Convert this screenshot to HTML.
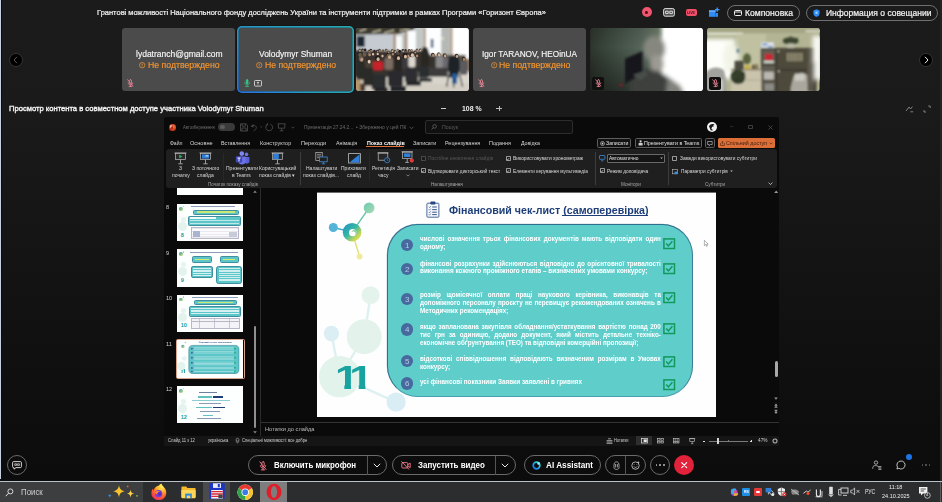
<!DOCTYPE html>
<html lang="ru"><head><meta charset="utf-8"><title>Webex</title>
<style>
html,body{margin:0;padding:0;}
body{width:942px;height:502px;overflow:hidden;position:relative;background:#101010;font-family:"Liberation Sans",sans-serif;}
#app{position:absolute;left:0;top:0;width:942px;height:481px;background:linear-gradient(180deg,#1b1b1b 0px,#1a1a1a 110px,#141414 250px,#0d0d0d 430px,#0c0c0c 481px);overflow:hidden;}
.t{position:absolute;white-space:nowrap;display:block;}
.b{position:absolute;box-sizing:border-box;}
svg{position:absolute;overflow:visible;}
</style></head><body>
<div id="app">

<div class="b" style="left:0.00px;top:0.00px;width:1.10px;height:479.00px;background:#c6d0de;"></div>
<div class="b" style="left:1.10px;top:0.00px;width:1.00px;height:480.00px;background:#0d0d0d;"></div>
<div class="b" style="left:940.40px;top:0.00px;width:1.60px;height:481.00px;background:#242424;"></div>
<span class="t" style="top:8px;font-size:7.8px;line-height:9.75px;color:#f0f0f0;left:97.00px;transform:scaleX(0.9617);transform-origin:0 50%;-webkit-text-stroke:0.22px #f0f0f0;">Грантові можливості Національного фонду досліджень України та інструменти підтримки в рамках Програми «Горизонт Європа»</span>
<div class="b" style="left:641.50px;top:7.10px;width:10.40px;height:10.40px;border-radius:50%;background:#f0566e;"></div>
<div class="b" style="left:645.20px;top:10.80px;width:3.20px;height:3.20px;border-radius:1px 50% 50% 1px;background:#4a1420;"></div>
<svg style="left:663px;top:8px" width="12" height="9" viewBox="0 0 12 9"><rect x="0.6" y="0.6" width="10.8" height="7.6" rx="1.6" fill="#4c4c4c" stroke="#e0e0e0" stroke-width="1"/><path d="M2.6 3.2h2.6v2.4H2.6zM6.8 3.2h2.6v2.4H6.8z" fill="none" stroke="#e8e8e8" stroke-width="0.9"/></svg>
<div class="b" style="left:685.50px;top:8.60px;width:11.50px;height:7.40px;border-radius:2px;background:#f0506a;"></div>
<span class="t" style="top:11px;font-size:3.6px;line-height:4.5px;color:#4a1420;font-weight:bold;left:687.20px;transform:scaleX(0.9990);transform-origin:50% 50%;">LIVE</span>
<svg style="left:708px;top:6.5px" width="12" height="11" viewBox="0 0 12 11"><path d="M1 3.4h6.6v6.4H1z" fill="#2f8df5"/><path d="M1 3.4h6.6v1.5H1z" fill="#6fb2ff"/><path d="M9.2 0.4v4.4M7 2.6h4.4" stroke="#3f9bff" stroke-width="1.3" fill="none"/><path d="M7.6 6l2.4 0v3.8H7.6z" fill="#2f8df5"/></svg>
<div class="b" style="left:727.40px;top:4.50px;width:72.40px;height:16.30px;border:1px solid #707070;border-radius:9px;"></div>
<svg style="left:733.5px;top:9.6px" width="8" height="6" viewBox="0 0 8 6"><rect x="0.5" y="0.5" width="7" height="5" rx="1" fill="none" stroke="#eee" stroke-width="1"/><path d="M0.5 2h7" stroke="#eee" stroke-width="0.9"/></svg>
<span class="t" style="top:8px;font-size:9.2px;line-height:11.5px;color:#f4f4f4;left:745.10px;transform:scaleX(0.9352);transform-origin:0 50%;-webkit-text-stroke:0.22px #f4f4f4;">Компоновка</span>
<div class="b" style="left:806.00px;top:4.50px;width:131.60px;height:16.30px;border:1px solid #707070;border-radius:9px;"></div>
<svg style="left:812.5px;top:8.6px" width="7" height="8" viewBox="0 0 7 8"><path d="M3.5 0.3L6.6 1.6v2.6c0 2-1.6 3.2-3.1 3.6C2 7.4 0.4 6.2 0.4 4.2V1.6z" fill="#2f8df5"/><circle cx="3.5" cy="3.8" r="1.2" fill="#9fd0ff"/></svg>
<span class="t" style="top:8px;font-size:9.2px;line-height:11.5px;color:#f4f4f4;left:825.80px;transform:scaleX(0.9237);transform-origin:0 50%;-webkit-text-stroke:0.22px #f4f4f4;">Информация о совещании</span>
<div class="b" style="left:9.30px;top:52.50px;width:14.00px;height:14.00px;border-radius:50%;background:#000;border:1px solid #333;"></div>
<svg style="left:13.4px;top:56px" width="5" height="8" viewBox="0 0 5 8"><path d="M4 0.8L1 4l3 3.2" fill="none" stroke="#5a5a5a" stroke-width="1"/></svg>
<div class="b" style="left:919.00px;top:52.50px;width:14.00px;height:14.00px;border-radius:50%;background:#000;border:1px solid #333;"></div>
<svg style="left:924px;top:56px" width="5" height="8" viewBox="0 0 5 8"><path d="M1 0.8L4 4l-3 3.2" fill="none" stroke="#f0f0f0" stroke-width="1"/></svg>
<div class="b" style="left:122.30px;top:27.60px;width:112.80px;height:63.60px;background:#4b4b4b;border-radius:3px;"></div>
<span class="t" style="top:49px;font-size:8.8px;line-height:11.0px;color:#f6f6f6;left:135.70px;transform:scaleX(0.9673);transform-origin:0 50%;-webkit-text-stroke:0.15px #f6f6f6;">lydatranch@gmail.com</span>
<svg style="left:139.00px;top:61.70px" width="6.4" height="6.4" viewBox="0 0 10 10"><circle cx="5" cy="5" r="4.2" fill="none" stroke="#f39a3a" stroke-width="1.1"/><path d="M5 2.6v3.2M5 7v0.8" stroke="#f39a3a" stroke-width="1.2" fill="none"/></svg><span class="t" style="top:60px;font-size:8.6px;line-height:10.75px;color:#f6962e;left:148.20px;transform:scaleX(1.0125);transform-origin:0 50%;-webkit-text-stroke:0.15px #f6962e;">Не подтверждено</span>
<svg style="left:126.60px;top:79.35px" width="6.8" height="8.5" viewBox="0 0 8 10"><g fill="none" stroke="#f08a9a" stroke-width="0.9" stroke-linecap="round"><rect x="2.9" y="0.8" width="2.4" height="5" rx="1.2"/><path d="M1.4 4.6c0 3.4 5.4 3.4 5.4 0M4.1 7.2v1.6M2.4 8.9h3.4M0.8 0.8l6 7.4"/></g></svg>
<div class="b" style="left:237.40px;top:26.10px;width:116.60px;height:66.60px;border-radius:5px;background:radial-gradient(circle at 0% 100%,#2a72dc 0%,#2a82d4 22%,#299cc0 55%,#2aaab2 100%);box-shadow:0 0 0 0.6px #121212;"></div>
<div class="b" style="left:239.30px;top:28.00px;width:112.80px;height:62.80px;background:#4b4b4b;border-radius:3.2px;box-shadow:0 0 0 0.5px rgba(20,40,50,0.6);"></div>
<span class="t" style="top:49px;font-size:8.8px;line-height:11.0px;color:#f6f6f6;left:259.10px;transform:scaleX(0.9580);transform-origin:0 50%;-webkit-text-stroke:0.15px #f6f6f6;">Volodymyr Shuman</span>
<svg style="left:256.00px;top:61.70px" width="6.4" height="6.4" viewBox="0 0 10 10"><circle cx="5" cy="5" r="4.2" fill="none" stroke="#f39a3a" stroke-width="1.1"/><path d="M5 2.6v3.2M5 7v0.8" stroke="#f39a3a" stroke-width="1.2" fill="none"/></svg><span class="t" style="top:60px;font-size:8.6px;line-height:10.75px;color:#f6962e;left:265.40px;transform:scaleX(1.0054);transform-origin:0 50%;-webkit-text-stroke:0.15px #f6962e;">Не подтверждено</span>
<svg style="left:244.3px;top:79.2px" width="6.2" height="8" viewBox="0 0 7 9"><g fill="none" stroke="#35c98e" stroke-width="0.8" stroke-linecap="round"><rect x="2.5" y="0.6" width="2" height="4.8" rx="1" fill="#35c98e"/><path d="M0.8 4.2c0 3.4 5.4 3.4 5.4 0M3.5 6.8v1.4M1.8 8.4h3.4"/></g></svg>
<svg style="left:254px;top:79.6px" width="8" height="7" viewBox="0 0 8 7"><rect x="0.5" y="0.5" width="7" height="5.6" rx="0.8" fill="none" stroke="#d8d8d8" stroke-width="0.9"/><path d="M4 4.6V2M2.9 3l1.1-1.1L5.1 3" fill="none" stroke="#d8d8d8" stroke-width="0.8"/></svg>
<svg style="left:356.4px;top:27.6px;border-radius:3px;overflow:hidden" width="112.8" height="63.6" viewBox="0 0 113 64">
<defs><filter id="bl1" x="-10%" y="-10%" width="120%" height="120%"><feGaussianBlur stdDeviation="0.950"/></filter>
<filter id="bl1b" x="-10%" y="-10%" width="120%" height="120%"><feGaussianBlur stdDeviation="0.800"/></filter></defs>
<rect width="113" height="64" fill="#c6c9c8"/>
<g filter="url(#bl1)">
<rect x="0" y="4" width="40" height="22" fill="#c5cbd0"/>
<path d="M-2 -2H62L56 2 40 6 -2 6.500z" fill="#3b372f"/>
<path d="M3 3.200l7-2.200M16 4.600l9-2.600M28 5l10-2.800M44 2.600l10-1.800" stroke="#e8e0c0" stroke-width="1.100"/>
<rect x="0.500" y="8" width="8" height="11" fill="#1f2731"/>
<rect x="37.600" y="5" width="2.200" height="20" fill="#a5856a"/>
<rect x="40" y="8" width="6.500" height="15" fill="#f7f9fb"/>
<rect x="46.500" y="6" width="3" height="18" fill="#b9bdb9"/>
<rect x="49.300" y="4" width="2.200" height="21" fill="#a5856a"/>
<rect x="51.600" y="3" width="8.600" height="21" fill="#fbfdff"/>
<rect x="60" y="0" width="8.500" height="26" fill="#c3c7c6"/>
<rect x="68.200" y="0" width="1.800" height="27" fill="#b08e72"/>
<rect x="70" y="-1" width="15.500" height="30" fill="#fdfeff"/>
<rect x="75" y="11" width="2.600" height="9" fill="#50627c"/>
<rect x="85.500" y="-1" width="9.800" height="31" fill="#b5b9b5"/>
<rect x="86" y="9" width="1.500" height="3" fill="#f8f0d0"/>
<rect x="95.200" y="-1" width="1.800" height="31" fill="#b89474"/>
<rect x="97" y="-1" width="17" height="32" fill="#ffffff"/>
<rect x="104" y="31" width="10" height="12" fill="#8c6c4c"/>
<rect x="-2" y="23" width="70" height="26" fill="#38332f"/>
<rect x="68" y="27" width="42" height="22" fill="#5a544e"/>
<rect x="-2" y="50" width="118" height="16" fill="#d3cec4"/>
<rect x="60" y="44" width="56" height="12" fill="#d9d5cc"/>
<path d="M0 22h6v10l4 6v14H0z" fill="#2c2a28"/>
<rect x="16" y="33.500" width="11" height="9" rx="2" fill="#c8222c"/>
<rect x="28.500" y="30" width="8.500" height="12" rx="2" fill="#7c6c62"/>
<rect x="9" y="32" width="8" height="12" rx="2" fill="#4a4036"/>
<rect x="38" y="29" width="9" height="14" rx="2" fill="#2a2624"/>
<rect x="52.500" y="27.500" width="7" height="12" rx="2" fill="#dcd8d0"/>
<rect x="46" y="30" width="6" height="12" rx="2" fill="#3a3a40"/>
<path d="M66 21c1-3 5-3 6 0l2 6v12h-9V27z" fill="#2a2522"/>
<rect x="74" y="29" width="7" height="14" rx="2" fill="#34302e"/>
<rect x="80" y="28.500" width="8" height="15" rx="2" fill="#8a8a8c"/>
<rect x="87" y="30" width="6" height="14" rx="2" fill="#6a6a70"/>
<path d="M93 30c2-3 8-3 10 0l2 8-3 12h-8l-2-12z" fill="#1d2026"/>
<rect x="96.500" y="46" width="5" height="10" fill="#2462a4"/>
<path d="M93 47l-2 12M104 47l3 12M98 50v10" stroke="#22252a" stroke-width="1.200"/>
<rect x="104" y="33" width="8" height="14" rx="2" fill="#5a5a5e"/>
<rect x="72" y="40" width="20" height="9" fill="#3c3a3a"/>
<rect x="15.500" y="47" width="14.500" height="15" rx="1.500" fill="#2b2d2f"/>
<rect x="32" y="43.500" width="15" height="15" rx="1.500" fill="#292b2d"/>
<rect x="49" y="40.500" width="13" height="14" rx="1.500" fill="#2d2f31"/>
<rect x="62.500" y="38" width="10.500" height="12" rx="1.500" fill="#2b2d2f"/>
<rect x="7" y="40" width="10" height="18" fill="#2a2a28"/>
<rect x="34" y="58.500" width="16" height="6" fill="#24262a"/>
<rect x="50" y="53.500" width="15" height="4.500" fill="#26282a"/>
<rect x="63" y="50.500" width="13" height="3.500" fill="#2a2c2e"/>
<rect x="18" y="60" width="14" height="5" fill="#26282a"/>
<rect x="-2" y="52" width="6.500" height="14" fill="#b8966a"/>
<rect x="4" y="56" width="5" height="8" fill="#4a3a30"/>
</g>
<g filter="url(#bl1b)"><ellipse cx="3.5" cy="22.3" rx="1.36" ry="1.56" fill="#5a4a3a"/>
<ellipse cx="3.7" cy="22.8" rx="0.84" ry="1.02" fill="#c8a890"/>
<ellipse cx="6.4" cy="22.1" rx="1.30" ry="1.50" fill="#1e1c1c"/>
<ellipse cx="6.7" cy="22.6" rx="0.81" ry="0.98" fill="#a88870"/>
<ellipse cx="8.9" cy="22.2" rx="1.27" ry="1.46" fill="#2a2420"/>
<ellipse cx="13.0" cy="23.4" rx="1.33" ry="1.53" fill="#5a4a3a"/>
<ellipse cx="13.3" cy="23.9" rx="0.83" ry="1.00" fill="#a88870"/>
<ellipse cx="14.7" cy="22.5" rx="1.32" ry="1.52" fill="#1e1c1c"/>
<ellipse cx="14.9" cy="22.9" rx="0.82" ry="0.99" fill="#b89880"/>
<ellipse cx="18.3" cy="23.3" rx="1.32" ry="1.52" fill="#2a2420"/>
<ellipse cx="21.2" cy="23.4" rx="1.25" ry="1.44" fill="#2a2420"/>
<ellipse cx="21.5" cy="23.8" rx="0.77" ry="0.94" fill="#e0c8b0"/>
<ellipse cx="23.4" cy="22.5" rx="1.37" ry="1.58" fill="#4a3a30"/>
<ellipse cx="23.7" cy="22.9" rx="0.85" ry="1.03" fill="#a88870"/>
<ellipse cx="27.0" cy="23.0" rx="1.22" ry="1.40" fill="#6a5a48"/>
<ellipse cx="30.2" cy="22.2" rx="1.22" ry="1.40" fill="#4a3a30"/>
<ellipse cx="30.4" cy="22.6" rx="0.76" ry="0.92" fill="#a88870"/>
<ellipse cx="32.4" cy="24.2" rx="1.15" ry="1.32" fill="#4a3a30"/>
<ellipse cx="32.6" cy="24.6" rx="0.71" ry="0.86" fill="#b89880"/>
<ellipse cx="36.2" cy="22.9" rx="1.48" ry="1.71" fill="#5a4a3a"/>
<ellipse cx="36.5" cy="23.4" rx="0.92" ry="1.11" fill="#e0c8b0"/>
<ellipse cx="38.9" cy="23.8" rx="1.24" ry="1.42" fill="#1e1c1c"/>
<ellipse cx="39.2" cy="24.2" rx="0.77" ry="0.93" fill="#e0c8b0"/>
<ellipse cx="41.8" cy="22.2" rx="1.14" ry="1.31" fill="#6a5a48"/>
<ellipse cx="42.0" cy="22.5" rx="0.71" ry="0.85" fill="#c8a890"/>
<ellipse cx="43.7" cy="23.5" rx="1.36" ry="1.56" fill="#1e1c1c"/>
<ellipse cx="46.9" cy="22.8" rx="1.37" ry="1.57" fill="#1e1c1c"/>
<ellipse cx="47.2" cy="23.3" rx="0.85" ry="1.03" fill="#d8b8a0"/>
<ellipse cx="49.6" cy="22.3" rx="1.12" ry="1.29" fill="#3a2e28"/>
<ellipse cx="53.3" cy="22.9" rx="1.47" ry="1.69" fill="#3a2e28"/>
<ellipse cx="53.6" cy="23.4" rx="0.91" ry="1.10" fill="#a88870"/>
<ellipse cx="55.8" cy="22.6" rx="1.15" ry="1.33" fill="#5a4a3a"/>
<ellipse cx="56.0" cy="23.0" rx="0.72" ry="0.87" fill="#d8b8a0"/>
<ellipse cx="59.1" cy="24.2" rx="1.37" ry="1.58" fill="#3a2e28"/>
<ellipse cx="59.4" cy="24.7" rx="0.85" ry="1.03" fill="#b89880"/>
<ellipse cx="61.1" cy="22.3" rx="1.36" ry="1.57" fill="#5a4a3a"/>
<ellipse cx="61.4" cy="22.8" rx="0.85" ry="1.02" fill="#b89880"/>
<ellipse cx="64.3" cy="22.0" rx="1.27" ry="1.46" fill="#5a4a3a"/>
<ellipse cx="64.5" cy="22.5" rx="0.79" ry="0.95" fill="#d8b8a0"/>
<ellipse cx="3.9" cy="27.2" rx="1.81" ry="2.08" fill="#6a5a48"/>
<ellipse cx="8.3" cy="26.6" rx="1.95" ry="2.24" fill="#6a5a48"/>
<ellipse cx="13.2" cy="26.5" rx="1.76" ry="2.02" fill="#6a5a48"/>
<ellipse cx="13.5" cy="27.1" rx="1.09" ry="1.32" fill="#a88870"/>
<ellipse cx="16.5" cy="25.7" rx="1.68" ry="1.94" fill="#4a3a30"/>
<ellipse cx="16.9" cy="26.3" rx="1.04" ry="1.26" fill="#e0c8b0"/>
<ellipse cx="21.3" cy="25.5" rx="1.66" ry="1.91" fill="#4a3a30"/>
<ellipse cx="21.6" cy="26.1" rx="1.03" ry="1.25" fill="#e0c8b0"/>
<ellipse cx="26.1" cy="27.7" rx="1.85" ry="2.12" fill="#4a3a30"/>
<ellipse cx="26.4" cy="28.3" rx="1.14" ry="1.38" fill="#d8b8a0"/>
<ellipse cx="32.0" cy="26.7" rx="1.65" ry="1.89" fill="#1e1c1c"/>
<ellipse cx="32.3" cy="27.3" rx="1.02" ry="1.23" fill="#a88870"/>
<ellipse cx="36.6" cy="25.7" rx="1.64" ry="1.89" fill="#4a3a30"/>
<ellipse cx="36.9" cy="26.3" rx="1.02" ry="1.23" fill="#a88870"/>
<ellipse cx="42.1" cy="25.9" rx="1.61" ry="1.85" fill="#5a4a3a"/>
<ellipse cx="45.9" cy="27.2" rx="1.97" ry="2.26" fill="#4a3a30"/>
<ellipse cx="52.0" cy="27.7" rx="1.88" ry="2.16" fill="#4a3a30"/>
<ellipse cx="52.3" cy="28.3" rx="1.16" ry="1.41" fill="#b89880"/>
<ellipse cx="55.5" cy="26.1" rx="1.82" ry="2.09" fill="#6a5a48"/>
<ellipse cx="55.9" cy="26.7" rx="1.13" ry="1.36" fill="#b89880"/>
<ellipse cx="60.8" cy="27.5" rx="1.90" ry="2.19" fill="#3a2e28"/>
<ellipse cx="61.2" cy="28.1" rx="1.18" ry="1.43" fill="#a88870"/>
<ellipse cx="5.0" cy="31.0" rx="2.50" ry="2.88" fill="#6a5a48"/>
<ellipse cx="5.5" cy="31.9" rx="1.55" ry="1.88" fill="#b89880"/>
<ellipse cx="12.5" cy="33.0" rx="2.50" ry="2.88" fill="#3a2e28"/>
<ellipse cx="13.0" cy="33.9" rx="1.55" ry="1.88" fill="#e0c8b0"/>
<ellipse cx="21.5" cy="30.5" rx="2.50" ry="2.88" fill="#1e1c1c"/>
<ellipse cx="22.0" cy="31.4" rx="1.55" ry="1.88" fill="#d8b8a0"/>
<ellipse cx="33.0" cy="28.5" rx="2.50" ry="2.88" fill="#6a5a48"/>
<ellipse cx="33.5" cy="29.4" rx="1.55" ry="1.88" fill="#c8a890"/>
<ellipse cx="42.0" cy="29.5" rx="2.50" ry="2.88" fill="#2a2420"/>
<ellipse cx="42.5" cy="30.4" rx="1.55" ry="1.88" fill="#d8b8a0"/>
<ellipse cx="49.0" cy="28.0" rx="2.50" ry="2.88" fill="#1e1c1c"/>
<ellipse cx="49.5" cy="28.9" rx="1.55" ry="1.88" fill="#d8b8a0"/>
<ellipse cx="56.0" cy="26.5" rx="2.50" ry="2.88" fill="#3a2e28"/>
<ellipse cx="56.5" cy="27.4" rx="1.55" ry="1.88" fill="#e0c8b0"/>
<ellipse cx="77.0" cy="27.0" rx="1.90" ry="2.18" fill="#4a3a30"/>
<ellipse cx="77.4" cy="27.7" rx="1.18" ry="1.42" fill="#a88870"/>
<ellipse cx="83.0" cy="26.5" rx="1.90" ry="2.18" fill="#6a5a48"/>
<ellipse cx="83.4" cy="27.2" rx="1.18" ry="1.42" fill="#d8b8a0"/>
<ellipse cx="89.0" cy="27.5" rx="1.90" ry="2.18" fill="#4a3a30"/>
<ellipse cx="89.4" cy="28.2" rx="1.18" ry="1.42" fill="#c8a890"/>
<ellipse cx="101.0" cy="28.0" rx="1.90" ry="2.18" fill="#3a2e28"/>
<ellipse cx="101.4" cy="28.7" rx="1.18" ry="1.42" fill="#c8a890"/>
<ellipse cx="108.0" cy="31.0" rx="1.90" ry="2.18" fill="#3a2e28"/>
<ellipse cx="108.4" cy="31.7" rx="1.18" ry="1.42" fill="#a88870"/></g>
</svg>
<div class="b" style="left:473.40px;top:27.60px;width:112.80px;height:63.60px;background:#4b4b4b;border-radius:3px;"></div>
<span class="t" style="top:49px;font-size:8.8px;line-height:11.0px;color:#f6f6f6;left:482.00px;transform:scaleX(0.9354);transform-origin:0 50%;-webkit-text-stroke:0.15px #f6f6f6;">Igor TARANOV, HEOinUA</span>
<svg style="left:490.80px;top:61.70px" width="6.4" height="6.4" viewBox="0 0 10 10"><circle cx="5" cy="5" r="4.2" fill="none" stroke="#f39a3a" stroke-width="1.1"/><path d="M5 2.6v3.2M5 7v0.8" stroke="#f39a3a" stroke-width="1.2" fill="none"/></svg><span class="t" style="top:60px;font-size:8.6px;line-height:10.75px;color:#f6962e;left:499.00px;transform:scaleX(1.0111);transform-origin:0 50%;-webkit-text-stroke:0.15px #f6962e;">Не подтверждено</span>
<svg style="left:478.10px;top:79.35px" width="6.8" height="8.5" viewBox="0 0 8 10"><g fill="none" stroke="#f08a9a" stroke-width="0.9" stroke-linecap="round"><rect x="2.9" y="0.8" width="2.4" height="5" rx="1.2"/><path d="M1.4 4.6c0 3.4 5.4 3.4 5.4 0M4.1 7.2v1.6M2.4 8.9h3.4M0.8 0.8l6 7.4"/></g></svg>
<svg style="left:590.2px;top:27.6px;border-radius:3px;overflow:hidden" width="112.8" height="63.6" viewBox="0 0 113 64">
<defs><filter id="bl2" x="-30%" y="-30%" width="160%" height="160%"><feGaussianBlur stdDeviation="2.400"/></filter>
<filter id="bl2s" x="-20%" y="-20%" width="140%" height="140%"><feGaussianBlur stdDeviation="1"/></filter>
<linearGradient id="g2" x1="0" x2="1" y1="0" y2="0"><stop offset="0" stop-color="#2e362d"/><stop offset="0.200" stop-color="#3f4c41"/><stop offset="0.450" stop-color="#56655a"/><stop offset="0.640" stop-color="#75836f"/><stop offset="0.670" stop-color="#f2f5f0"/><stop offset="1" stop-color="#ffffff"/></linearGradient>
<linearGradient id="g2b" x1="0" x2="0" y1="0" y2="1"><stop offset="0" stop-color="#000" stop-opacity="0.120"/><stop offset="0.300" stop-color="#000" stop-opacity="0"/><stop offset="1" stop-color="#000" stop-opacity="0.420"/></linearGradient></defs>
<rect width="113" height="64" fill="url(#g2)"/>
<rect width="75" height="64" fill="url(#g2b)"/>
<g filter="url(#bl2)">
<rect x="72" y="-4" width="46" height="72" fill="#ffffff"/>
<ellipse cx="64.500" cy="21" rx="11" ry="13" fill="#86887f"/>
<ellipse cx="67" cy="36" rx="7" ry="9" fill="#9c9a92"/>
<path d="M40 68V50l16-9 14 3 14 9 10 15z" fill="#3c3f3c"/>
<path d="M78 50l12 7 6 11H76z" fill="#80837c"/>
<ellipse cx="97" cy="20" rx="14" ry="26" fill="#ffffff"/>
</g>
<g filter="url(#bl2s)"><path d="M35 31l17.500-7.500v22L35 56z" fill="#14171b"/><path d="M43 47l12-4 3 4-8 6z" fill="#4a4d4a"/><rect x="29.500" y="56" width="3" height="3" fill="#7a2028"/></g>
</svg>
<div class="b" style="left:591.80px;top:77.00px;width:12.10px;height:12.60px;background:#101010;border-radius:2px;"></div>
<svg style="left:594.60px;top:79.15px" width="6.8" height="8.5" viewBox="0 0 8 10"><g fill="none" stroke="#f08a9a" stroke-width="0.9" stroke-linecap="round"><rect x="2.9" y="0.8" width="2.4" height="5" rx="1.2"/><path d="M1.4 4.6c0 3.4 5.4 3.4 5.4 0M4.1 7.2v1.6M2.4 8.9h3.4M0.8 0.8l6 7.4"/></g></svg>
<svg style="left:707.2px;top:27.6px;border-radius:3px;overflow:hidden" width="112.8" height="63.6" viewBox="0 0 113 64">
<defs><filter id="bl3" x="-10%" y="-10%" width="120%" height="120%"><feGaussianBlur stdDeviation="0.900"/></filter>
<filter id="bl3b" x="-30%" y="-30%" width="160%" height="160%"><feGaussianBlur stdDeviation="2.200"/></filter></defs>
<rect width="113" height="64" fill="#b3b493"/>
<g filter="url(#bl3)">
<rect x="-2" y="-2" width="118" height="7" fill="#a4a584"/>
<rect x="0" y="4.800" width="36" height="1.800" fill="#e9ebda"/>
<rect x="99" y="2.500" width="15" height="1.600" fill="#dfe1cf"/>
<rect x="29" y="6" width="30" height="40" fill="#bfc1a1"/>
</g>
<g filter="url(#bl3b)">
<rect x="-4" y="11" width="32" height="40" fill="#fdfef9"/>
<ellipse cx="24" cy="30" rx="8" ry="16" fill="#f2f4e8"/>
</g>
<g filter="url(#bl3)">
<path d="M-2 66V46c4-7 14-8 19-3l2 10v13z" fill="#a2a29e"/>
<rect x="2" y="52" width="14" height="14" fill="#c6c6c2"/>
<rect x="54.500" y="14.500" width="12.500" height="6" fill="#e1e8f0"/>
<rect x="55.500" y="15.800" width="5" height="1.600" fill="#3a70c0"/>
<rect x="61" y="18" width="5" height="1.400" fill="#5a80b0"/>
<rect x="54" y="20" width="56" height="46" fill="#4d483b"/>
<rect x="55.500" y="22" width="12.500" height="42" fill="#615d52"/>
<rect x="58" y="26" width="8" height="7" rx="2" fill="#c92830"/>
<rect x="57" y="33" width="10" height="2.200" fill="#cfe0d4"/>
<rect x="55.500" y="36.500" width="12.500" height="1.200" fill="#3a362c"/>
<rect x="57" y="44" width="10" height="8" fill="#b9b9b1"/>
<rect x="55.500" y="52.500" width="12.500" height="1.200" fill="#3a362c"/>
<rect x="58" y="56" width="9" height="7" fill="#8c8c86"/>
<rect x="69" y="22" width="1.200" height="44" fill="#3a362c"/>
<rect x="80" y="25" width="16" height="8.500" fill="#8d876f"/>
<path d="M83 25v8.500M86.500 25v8.500M90 25v8.500M93 25v8.500" stroke="#5a5546" stroke-width="0.800"/>
<rect x="70" y="41.500" width="38" height="1.400" fill="#38342a"/>
<circle cx="71.500" cy="23.500" r="0.900" fill="#d8d4c0"/><circle cx="103.500" cy="23.500" r="0.900" fill="#d8d4c0"/><circle cx="72" cy="43.500" r="0.900" fill="#d8d4c0"/>
<path d="M84 60l3-12 8-3 8 3 3 9v9H84z" fill="#aaa89e"/>
<rect x="88" y="46" width="10" height="7" fill="#cbcbc3"/>
<rect x="101" y="20" width="6" height="44" fill="#59544a"/>
<rect x="24" y="42" width="30.500" height="24" fill="#cac4ad"/>
<rect x="24" y="41" width="30.500" height="1.600" fill="#857f69"/>
<rect x="26" y="52" width="27" height="0.800" fill="#a8a28c"/>
<ellipse cx="31" cy="49" rx="7.500" ry="7.500" fill="#363f2c"/>
<path d="M24 47l5-4M38 45l-5 3M27 55l4-5M36 55l-4-5" stroke="#2c3524" stroke-width="1.600"/>
<rect x="27.500" y="33" width="9" height="9" fill="#4b4b41"/>
<ellipse cx="40" cy="31" rx="4" ry="5.500" fill="#59623e"/>
<ellipse cx="31" cy="23" rx="1.600" ry="2.400" fill="#6a8a9a"/>
<rect x="38" y="37.500" width="5" height="4" fill="#c9b040"/>
<rect x="45" y="37" width="3" height="4.500" fill="#6b5b3b"/><rect x="48.500" y="36.500" width="2.500" height="5" fill="#7b6b4b"/>
<ellipse cx="84" cy="13" rx="8" ry="3.800" fill="#3b452f"/>
<path d="M77 11l4 3M91 10l-4 4M84 8v5" stroke="#3b452f" stroke-width="1.200"/>
<rect x="81" y="15.500" width="6" height="4.500" fill="#bcbcac"/>
</g>
<g filter="url(#bl3b)"><rect x="106" y="8" width="9" height="44" fill="#f8faf4"/><rect x="103" y="34" width="5" height="22" fill="#6a655a"/></g>
</svg>
<div class="b" style="left:708.80px;top:77.00px;width:12.10px;height:12.60px;background:#101010;border-radius:2px;"></div>
<svg style="left:711.60px;top:79.15px" width="6.8" height="8.5" viewBox="0 0 8 10"><g fill="none" stroke="#f08a9a" stroke-width="0.9" stroke-linecap="round"><rect x="2.9" y="0.8" width="2.4" height="5" rx="1.2"/><path d="M1.4 4.6c0 3.4 5.4 3.4 5.4 0M4.1 7.2v1.6M2.4 8.9h3.4M0.8 0.8l6 7.4"/></g></svg>
<span class="t" style="top:104px;font-size:8px;line-height:10.0px;color:#f2f2f2;left:9.00px;transform:scaleX(0.9499);transform-origin:0 50%;-webkit-text-stroke:0.4px #f2f2f2;">Просмотр контента в совместном доступе участника Volodymyr Shuman</span>
<div class="b" style="left:440.50px;top:107.80px;width:5.60px;height:1.00px;background:#cdcdcd;"></div>
<span class="t" style="top:104px;font-size:7.6px;line-height:9.5px;color:#f0f0f0;font-weight:bold;left:461.50px;transform:scaleX(0.9095);transform-origin:0 50%;">108 %</span>
<div class="b" style="left:496.20px;top:107.80px;width:5.60px;height:1.00px;background:#bdbdbd;"></div>
<div class="b" style="left:498.50px;top:105.50px;width:1.00px;height:5.60px;background:#bdbdbd;"></div>
<svg style="left:904.5px;top:105px" width="9" height="8" viewBox="0 0 9 8"><path d="M1 6L4 2l1.6 2L7.4 1.6M5.4 6.8h2.8" fill="none" stroke="#8a8a8a" stroke-width="0.9"/></svg>
<svg style="left:922.5px;top:104.5px" width="8" height="8" viewBox="0 0 8 8"><path d="M5.2 1h2v2M3 7H1V5" fill="none" stroke="#8a8a8a" stroke-width="0.9"/></svg>
<div class="b" style="left:163.50px;top:117.30px;width:615.80px;height:328.30px;background:#0a0a0a;border-radius:2.5px 2.5px 0 0;"></div>
<div class="b" style="left:169.20px;top:123.60px;width:7.00px;height:7.00px;border-radius:50%;background:radial-gradient(circle at 65% 35%,#f0703a 0%,#cf3f1f 50%,#a82a1a 100%);"></div>
<div class="b" style="left:169.60px;top:125.20px;width:3.40px;height:3.80px;background:#b8301c;border-radius:0.6px;"></div>
<span class="t" style="top:125px;font-size:3.6px;line-height:4.5px;color:#ffd8c8;font-weight:bold;left:170.20px;transform:scaleX(0.9990);transform-origin:0 50%;">P</span>
<span class="t" style="top:124px;font-size:5px;line-height:6.25px;color:#6c6c6c;left:182.80px;transform:scaleX(0.8254);transform-origin:0 50%;">Автозбереження</span>
<div class="b" style="left:218.40px;top:123.40px;width:16.40px;height:7.60px;border-radius:4px;background:#3a3a3a;"></div>
<div class="b" style="left:220.00px;top:124.90px;width:4.60px;height:4.60px;border-radius:50%;background:#5c5c5c;"></div>
<svg style="left:239.5px;top:122.8px" width="60" height="9" viewBox="0 0 60 9"><g fill="none" stroke="#565656" stroke-width="0.75"><path d="M0.500 0.800h5.600l1.400 1.400v5.800H0.500z"/><path d="M2 0.800v2.400h3.400V0.800M2 8V5h4v3"/><path d="M13 1.400l-1.600 2 2.400 0.600M11.600 3.300c3-2.400 6.400 0.600 3.800 3.200l-1.800 1.600"/><path d="M20.400 3.400l1 0.900 1-0.900" stroke-width="0.6"/><path d="M30.400 1.200a3.400 3.400 0 1 1-3 0.300M27.600 0.200v1.800h-1.800"/><path d="M37.600 0.800h8M38.400 1v4.200h6.400V1M41.600 5.400v2.200M39.800 7.800h3.600"/><path d="M51.600 3.800l1.300 1.400 1.300-1.400" stroke-width="0.7"/></g></svg>
<span class="t" style="top:124px;font-size:5.4px;line-height:6.75px;color:#6c6c6c;left:304.00px;transform:scaleX(0.9011);transform-origin:0 50%;">Презентація 27.24.2...</span>
<span class="t" style="top:124px;font-size:5.4px;line-height:6.75px;color:#6c6c6c;left:356.00px;transform:scaleX(0.9264);transform-origin:0 50%;">• Збережено у цей ПК</span>
<svg style="left:408.5px;top:125.6px" width="5" height="4" viewBox="0 0 5 4"><path d="M0.600 0.800l1.900 2 1.900-2" fill="none" stroke="#6c6c6c" stroke-width="0.7"/></svg>
<div class="b" style="left:425.40px;top:120.30px;width:147.40px;height:13.30px;background:#101010;border:0.8px solid #2d2d2d;border-radius:2px;"></div>
<svg style="left:430.5px;top:124px" width="6" height="6" viewBox="0 0 6 6"><circle cx="3.600" cy="2.400" r="1.800" fill="none" stroke="#6c6c6c" stroke-width="0.7"/><path d="M2.300 3.700L0.500 5.500" stroke="#6c6c6c" stroke-width="0.7"/></svg>
<span class="t" style="top:124px;font-size:5.4px;line-height:6.75px;color:#5c5c5c;left:442.00px;transform:scaleX(0.9828);transform-origin:0 50%;">Пошук</span>
<div class="b" style="left:706.80px;top:121.80px;width:10.40px;height:10.40px;border-radius:50%;background:#f2f2f2;"></div>
<svg style="left:706.400px;top:121.400px" width="11.200" height="11.200" viewBox="0 0 11.200 11.200"><path d="M3 5.200c1-1.800 2.600-2.600 4.400-2.200l1.200 1-1.400 0.200 0.600 1.200-1.600 0.400-0.800 2 1.800 1.400-2.400 0.200z" fill="#1c1c1c"/></svg>
<span class="t" style="top:123px;font-size:6px;line-height:7.5px;color:#565656;left:729.83px;transform:scaleX(0.9990);transform-origin:50% 50%;">–</span>
<div class="b" style="left:748.20px;top:124.80px;width:4.60px;height:4.20px;border:0.6px solid #3c3c3c;border-radius:0.8px;"></div>
<svg style="left:767.600px;top:124.600px" width="5" height="5" viewBox="0 0 5 5"><path d="M0.500 0.500l4 4M4.500 0.500l-4 4" stroke="#585858" stroke-width="0.7"/></svg>
<span class="t" style="top:140px;font-size:6px;line-height:7.5px;color:#d4d4d4;left:169.50px;transform:scaleX(0.8474);transform-origin:0 50%;">Файл</span>
<span class="t" style="top:140px;font-size:6px;line-height:7.5px;color:#d4d4d4;left:190.40px;transform:scaleX(0.9356);transform-origin:0 50%;">Основне</span>
<span class="t" style="top:140px;font-size:6px;line-height:7.5px;color:#d4d4d4;left:221.00px;transform:scaleX(0.8846);transform-origin:0 50%;">Вставлення</span>
<span class="t" style="top:140px;font-size:6px;line-height:7.5px;color:#d4d4d4;left:259.80px;transform:scaleX(0.9120);transform-origin:0 50%;">Конструктор</span>
<span class="t" style="top:140px;font-size:6px;line-height:7.5px;color:#d4d4d4;left:300.80px;transform:scaleX(0.9271);transform-origin:0 50%;">Переходи</span>
<span class="t" style="top:140px;font-size:6px;line-height:7.5px;color:#d4d4d4;left:335.80px;transform:scaleX(0.8786);transform-origin:0 50%;">Анімація</span>
<span class="t" style="top:140px;font-size:6px;line-height:7.5px;color:#d4d4d4;left:412.80px;transform:scaleX(0.8969);transform-origin:0 50%;">Записати</span>
<span class="t" style="top:140px;font-size:6px;line-height:7.5px;color:#d4d4d4;left:444.70px;transform:scaleX(0.9025);transform-origin:0 50%;">Рецензування</span>
<span class="t" style="top:140px;font-size:6px;line-height:7.5px;color:#d4d4d4;left:489.00px;transform:scaleX(0.9079);transform-origin:0 50%;">Подання</span>
<span class="t" style="top:140px;font-size:6px;line-height:7.5px;color:#d4d4d4;left:521.20px;transform:scaleX(0.8710);transform-origin:0 50%;">Довідка</span>
<span class="t" style="top:139px;font-size:6.1px;line-height:7.62px;color:#ffffff;font-weight:bold;left:366.50px;transform:scaleX(0.8773);transform-origin:0 50%;">Показ слайдів</span>
<div class="b" style="left:366.30px;top:146.10px;width:38.20px;height:1.00px;background:#e0703c;"></div>
<div class="b" style="left:597.20px;top:138.40px;width:33.80px;height:9.40px;border:0.7px solid #5e5e5e;border-radius:1.6px;background:#121212;"></div>
<svg style="left:599.600px;top:140.500px" width="5" height="5" viewBox="0 0 5 5"><circle cx="2.500" cy="2.500" r="2" fill="none" stroke="#d0d0d0" stroke-width="0.6"/><circle cx="2.500" cy="2.500" r="0.900" fill="#d0d0d0"/></svg>
<span class="t" style="top:140px;font-size:5.6px;line-height:7.0px;color:#e2e2e2;left:606.00px;transform:scaleX(0.9278);transform-origin:0 50%;">Записати</span>
<div class="b" style="left:635.30px;top:138.40px;width:66.40px;height:9.40px;border:0.7px solid #5e5e5e;border-radius:1.6px;background:#121212;"></div>
<svg style="left:637.600px;top:140.200px" width="5" height="6" viewBox="0 0 5 6"><circle cx="2.600" cy="1.300" r="1.100" fill="#d0d0d0"/><path d="M0.600 5.600V3.400c0-1 4-1 4 0v2.200z" fill="#d0d0d0"/></svg>
<span class="t" style="top:140px;font-size:5.6px;line-height:7.0px;color:#e2e2e2;left:643.60px;transform:scaleX(0.9478);transform-origin:0 50%;">Презентувати в Teams</span>
<div class="b" style="left:705.30px;top:138.40px;width:9.80px;height:9.40px;border:0.7px solid #5e5e5e;border-radius:1.6px;background:#121212;"></div>
<svg style="left:707.400px;top:140.600px" width="6" height="5.500" viewBox="0 0 6 5.500"><path d="M0.600 0.500h4.600v3H3.400L2.200 4.700V3.500H0.600z" fill="none" stroke="#cfcfcf" stroke-width="0.6"/></svg>
<div class="b" style="left:718.00px;top:138.20px;width:56.80px;height:9.90px;border-radius:1.6px;background:#dc6f38;"></div>
<svg style="left:720.200px;top:140.600px" width="5" height="5" viewBox="0 0 5 5"><path d="M0.600 2v2.500h3.800V2M2.500 3.200V0.500M1.500 1.400l1-1 1 1" fill="none" stroke="#40200f" stroke-width="0.6"/></svg>
<span class="t" style="top:140px;font-size:5.6px;line-height:7.0px;color:#3a1c0c;left:726.40px;transform:scaleX(0.9569);transform-origin:0 50%;">Спільний доступ</span>
<svg style="left:769.200px;top:141.800px" width="4" height="3" viewBox="0 0 4 3"><path d="M0.500 0.600l1.500 1.500 1.500-1.500" fill="none" stroke="#40200f" stroke-width="0.6"/></svg>
<div class="b" style="left:166.40px;top:149.00px;width:610.30px;height:38.80px;background:#1f1f1f;border-radius:3px;"></div>
<svg style="left:174.10px;top:152.00px" width="13" height="13" viewBox="0 0 13 13"><path d="M0.6 1h11.800" stroke="#c8c8c8" stroke-width="0.9"/><rect x="1.6" y="1.400" width="9.800" height="6.200" fill="#2a2a2a" stroke="#bdbdbd" stroke-width="0.7"/><path d="M5.300 2.600l3 1.900-3 1.900z" fill="#35b36a"/><path d="M6.500 7.800v3.800M4.300 11.800h4.400" stroke="#bdbdbd" stroke-width="0.8" fill="none"/></svg>
<span class="t" style="top:165px;font-size:5.0px;line-height:6.25px;color:#dadada;left:179.09px;transform:scaleX(0.9990);transform-origin:50% 50%;">З</span><span class="t" style="top:172px;font-size:5.0px;line-height:6.25px;color:#dadada;left:171.76px;transform:scaleX(0.9990);transform-origin:50% 50%;">початку</span>
<svg style="left:199.10px;top:152.00px" width="13" height="13" viewBox="0 0 13 13"><path d="M0.6 1h11.800" stroke="#c8c8c8" stroke-width="0.9"/><rect x="1.6" y="1.400" width="9.800" height="6.200" fill="#2a2a2a" stroke="#bdbdbd" stroke-width="0.7"/><rect x="3" y="2.400" width="7" height="4.200" fill="#2f7fd8"/><rect x="6.500" y="3" width="3" height="1.600" fill="#9cc8f4"/><path d="M6.500 7.800v3.800M4.300 11.800h4.400" stroke="#bdbdbd" stroke-width="0.8" fill="none"/></svg>
<span class="t" style="top:165px;font-size:5.0px;line-height:6.25px;color:#dadada;left:191.93px;transform:scaleX(0.9990);transform-origin:50% 50%;">З поточного</span><span class="t" style="top:172px;font-size:5.0px;line-height:6.25px;color:#dadada;left:197.26px;transform:scaleX(0.9990);transform-origin:50% 50%;">слайда</span>
<div class="b" style="left:223.00px;top:152.50px;width:0.60px;height:28.00px;background:#292929;"></div>
<svg style="left:234.500px;top:150.800px" width="15" height="14" viewBox="0 0 15 14"><circle cx="11.500" cy="3.400" r="1.800" fill="#6b74e6"/><path d="M9 6h5.400v4.200c0 1.600-1.300 2.400-2.700 2.400S9 11.800 9 10.200z" fill="#5a62d8"/><circle cx="6.800" cy="2.600" r="2.300" fill="#7f88f2"/><path d="M3.400 5.600h7.200v5c0 2-1.600 3-3.600 3s-3.600-1-3.600-3z" fill="#6b74e6"/><rect x="0.800" y="5.200" width="6.400" height="6.400" rx="0.800" fill="#4048b8"/><path d="M2.400 7h3.200M4 7v3.400" stroke="#fff" stroke-width="0.900"/></svg>
<span class="t" style="top:165px;font-size:5.0px;line-height:6.25px;color:#dadada;left:225.69px;transform:scaleX(0.9990);transform-origin:50% 50%;">Презентувати</span><span class="t" style="top:172px;font-size:5.0px;line-height:6.25px;color:#dadada;left:232.31px;transform:scaleX(0.9990);transform-origin:50% 50%;">в Teams</span>
<svg style="left:271.30px;top:152.00px" width="13" height="13" viewBox="0 0 13 13"><path d="M0.6 1h11.800" stroke="#c8c8c8" stroke-width="0.9"/><rect x="1.6" y="1.400" width="9.800" height="6.200" fill="#2a2a2a" stroke="#bdbdbd" stroke-width="0.7"/><rect x="2.200" y="1.800" width="5.600" height="5.400" fill="#2f7fd8"/><path d="M6.500 7.800v3.800M4.300 11.800h4.400" stroke="#bdbdbd" stroke-width="0.8" fill="none"/></svg>
<span class="t" style="top:165px;font-size:5.0px;line-height:6.25px;color:#dadada;left:259.18px;transform:scaleX(0.9990);transform-origin:50% 50%;">Користувацький</span><span class="t" style="top:172px;font-size:5.0px;line-height:6.25px;color:#dadada;left:259.30px;transform:scaleX(0.9990);transform-origin:50% 50%;">показ слайдів ▾</span>
<span class="t" style="top:182px;font-size:4.6px;line-height:5.75px;color:#a6a6a6;left:207.96px;transform:scaleX(0.9990);transform-origin:50% 50%;">Початок показу слайдів</span>
<div class="b" style="left:300.00px;top:152.00px;width:0.70px;height:33.00px;background:#3c3c3c;"></div>
<svg style="left:315px;top:152px" width="13" height="13" viewBox="0 0 13 13"><rect x="0.800" y="0.600" width="6.400" height="8" fill="none" stroke="#bdbdbd" stroke-width="0.700"/><path d="M2 2.400h4M2 4h4M2 5.600h2" stroke="#bdbdbd" stroke-width="0.600"/><rect x="4.600" y="5" width="7.600" height="4.800" fill="#1f1f1f" stroke="#3f8fe0" stroke-width="0.800"/><path d="M8.400 10v1.600M6.600 11.800h3.600" stroke="#3f8fe0" stroke-width="0.800"/></svg>
<span class="t" style="top:165px;font-size:5.0px;line-height:6.25px;color:#dadada;left:305.75px;transform:scaleX(0.9990);transform-origin:50% 50%;">Налаштувати</span><span class="t" style="top:172px;font-size:5.0px;line-height:6.25px;color:#dadada;left:303.38px;transform:scaleX(0.9990);transform-origin:50% 50%;">показ слайдів...</span>
<svg style="left:347.500px;top:152.600px" width="13" height="11" viewBox="0 0 13 11"><rect x="0.600" y="0.600" width="11.800" height="9.400" fill="#1f1f1f" stroke="#bdbdbd" stroke-width="0.800"/><path d="M1.400 9.400L11.600 1.200V9.400z" fill="#2f7fd8"/></svg>
<span class="t" style="top:165px;font-size:5.0px;line-height:6.25px;color:#dadada;left:341.43px;transform:scaleX(0.9990);transform-origin:50% 50%;">Приховати</span><span class="t" style="top:172px;font-size:5.0px;line-height:6.25px;color:#dadada;left:346.85px;transform:scaleX(0.9990);transform-origin:50% 50%;">слайд</span>
<div class="b" style="left:369.30px;top:152.50px;width:0.60px;height:28.00px;background:#292929;"></div>
<svg style="left:377px;top:152.400px" width="14" height="12" viewBox="0 0 14 12"><path d="M0.600 0.800h10.800" stroke="#c8c8c8" stroke-width="0.900"/><rect x="1.200" y="1.200" width="9.600" height="7" fill="#262626" stroke="#bdbdbd" stroke-width="0.700"/><circle cx="10.200" cy="8.200" r="2.600" fill="#1f1f1f" stroke="#3f8fe0" stroke-width="0.800"/><path d="M10.200 6.800v1.500h1.200" stroke="#3f8fe0" stroke-width="0.600" fill="none"/></svg>
<span class="t" style="top:165px;font-size:5.0px;line-height:6.25px;color:#dadada;left:372.01px;transform:scaleX(0.9990);transform-origin:50% 50%;">Репетиція</span><span class="t" style="top:172px;font-size:5.0px;line-height:6.25px;color:#dadada;left:378.31px;transform:scaleX(0.9990);transform-origin:50% 50%;">часу</span>
<svg style="left:401px;top:151.400px" width="14" height="13" viewBox="0 0 14 13"><path d="M0.600 0.800h11.200" stroke="#c8c8c8" stroke-width="0.900"/><rect x="1.400" y="1.200" width="9.600" height="6.400" fill="#262626" stroke="#bdbdbd" stroke-width="0.700"/><rect x="3" y="2.400" width="6.400" height="3.600" fill="#2f7fd8"/><path d="M6.200 7.800v3.400M4.200 11.400h3.600" stroke="#bdbdbd" stroke-width="0.800"/><circle cx="10.800" cy="9.600" r="2.100" fill="#e0383c"/></svg>
<span class="t" style="top:165px;font-size:5px;line-height:6.25px;color:#dadada;left:396.72px;transform:scaleX(0.9990);transform-origin:50% 50%;">Записати</span>
<svg style="left:405.500px;top:174px" width="4" height="3" viewBox="0 0 4 3"><path d="M0.500 0.600l1.500 1.500 1.500-1.500" fill="none" stroke="#bdbdbd" stroke-width="0.600"/></svg>
<div class="b" style="left:420.80px;top:156.10px;width:4.80px;height:4.80px;border:0.6px solid #4a4a4a;border-radius:0.8px;background:#1a1a1a;"></div>
<span class="t" style="top:155px;font-size:5.2px;line-height:6.5px;color:#565656;left:428.00px;transform:scaleX(0.9534);transform-origin:0 50%;">Постійне оновлення слайдів</span>
<div class="b" style="left:420.80px;top:168.40px;width:4.80px;height:4.80px;border:0.6px solid #9a9a9a;border-radius:0.8px;background:#1a1a1a;"></div><svg style="left:421.20px;top:168.80px" width="4" height="4" viewBox="0 0 4 4"><path d="M0.7 2.1l0.9 0.9 1.7-2" fill="none" stroke="#e8e8e8" stroke-width="0.6"/></svg>
<span class="t" style="top:168px;font-size:5.2px;line-height:6.5px;color:#dadada;left:428.00px;transform:scaleX(0.9223);transform-origin:0 50%;">Відтворювати дикторський текст</span>
<div class="b" style="left:505.80px;top:156.10px;width:4.80px;height:4.80px;border:0.6px solid #9a9a9a;border-radius:0.8px;background:#1a1a1a;"></div><svg style="left:506.20px;top:156.50px" width="4" height="4" viewBox="0 0 4 4"><path d="M0.7 2.1l0.9 0.9 1.7-2" fill="none" stroke="#e8e8e8" stroke-width="0.6"/></svg>
<span class="t" style="top:155px;font-size:5.2px;line-height:6.5px;color:#dadada;left:513.00px;transform:scaleX(0.9390);transform-origin:0 50%;">Використовувати хронометраж</span>
<div class="b" style="left:505.80px;top:168.40px;width:4.80px;height:4.80px;border:0.6px solid #9a9a9a;border-radius:0.8px;background:#1a1a1a;"></div><svg style="left:506.20px;top:168.80px" width="4" height="4" viewBox="0 0 4 4"><path d="M0.7 2.1l0.9 0.9 1.7-2" fill="none" stroke="#e8e8e8" stroke-width="0.6"/></svg>
<span class="t" style="top:168px;font-size:5.2px;line-height:6.5px;color:#dadada;left:513.00px;transform:scaleX(0.9157);transform-origin:0 50%;">Елементи керування мультимедіа</span>
<span class="t" style="top:182px;font-size:4.6px;line-height:5.75px;color:#a6a6a6;left:431.30px;transform:scaleX(0.9990);transform-origin:50% 50%;">Налаштування</span>
<div class="b" style="left:594.50px;top:152.00px;width:0.70px;height:33.00px;background:#3c3c3c;"></div>
<svg style="left:599.300px;top:155.200px" width="6.400" height="6.400" viewBox="0 0 6.400 6.400"><rect x="0.500" y="0.500" width="5.400" height="3.800" rx="0.600" fill="none" stroke="#3f8fe0" stroke-width="0.800"/><path d="M2 5.800h2.400" stroke="#3f8fe0" stroke-width="0.800"/></svg>
<div class="b" style="left:607.20px;top:153.60px;width:57.40px;height:9.30px;border:0.7px solid #6a6a6a;border-radius:1px;background:#141414;"></div>
<span class="t" style="top:155px;font-size:5.2px;line-height:6.5px;color:#e0e0e0;left:609.00px;transform:scaleX(0.9381);transform-origin:0 50%;">Автоматично</span>
<svg style="left:660px;top:157.400px" width="3" height="2.400" viewBox="0 0 3 2.400"><path d="M0.200 0.400h2.600L1.500 2z" fill="#bdbdbd"/></svg>
<div class="b" style="left:599.80px;top:168.40px;width:4.80px;height:4.80px;border:0.6px solid #9a9a9a;border-radius:0.8px;background:#1a1a1a;"></div><svg style="left:600.20px;top:168.80px" width="4" height="4" viewBox="0 0 4 4"><path d="M0.7 2.1l0.9 0.9 1.7-2" fill="none" stroke="#e8e8e8" stroke-width="0.6"/></svg>
<span class="t" style="top:168px;font-size:5.2px;line-height:6.5px;color:#dadada;left:606.60px;transform:scaleX(0.9315);transform-origin:0 50%;">Режим доповідача</span>
<span class="t" style="top:182px;font-size:4.6px;line-height:5.75px;color:#a6a6a6;left:621.13px;transform:scaleX(0.9990);transform-origin:50% 50%;">Монітори</span>
<div class="b" style="left:667.70px;top:152.00px;width:0.70px;height:33.00px;background:#3c3c3c;"></div>
<div class="b" style="left:672.40px;top:156.10px;width:4.80px;height:4.80px;border:0.6px solid #9a9a9a;border-radius:0.8px;background:#1a1a1a;"></div>
<span class="t" style="top:155px;font-size:5.2px;line-height:6.5px;color:#dadada;left:680.00px;transform:scaleX(0.9247);transform-origin:0 50%;">Завжди використовувати субтитри</span>
<svg style="left:672.400px;top:168.600px" width="6" height="5.600" viewBox="0 0 6 5.600"><rect x="0.400" y="0.400" width="5" height="4.400" fill="none" stroke="#bdbdbd" stroke-width="0.600"/><rect x="2.600" y="2.600" width="3" height="2.600" fill="#3f8fe0"/></svg>
<span class="t" style="top:168px;font-size:5.2px;line-height:6.5px;color:#dadada;left:681.00px;transform:scaleX(0.9207);transform-origin:0 50%;">Параметри субтитрів</span>
<svg style="left:729.800px;top:170.400px" width="3" height="2.400" viewBox="0 0 3 2.400"><path d="M0.200 0.400h2.600L1.500 2z" fill="#bdbdbd"/></svg>
<span class="t" style="top:182px;font-size:4.6px;line-height:5.75px;color:#a6a6a6;left:704.89px;transform:scaleX(0.9990);transform-origin:50% 50%;">Субтитри</span>
<svg style="left:768px;top:182px" width="5" height="3.400" viewBox="0 0 5 3.400"><path d="M0.600 0.600l1.900 2 1.900-2" fill="none" stroke="#d0d0d0" stroke-width="0.800"/></svg>
<div class="b" style="left:260.30px;top:188.00px;width:0.80px;height:248.00px;background:#2b2b2b;"></div>
<svg style="left:253px;top:190.400px" width="4" height="3" viewBox="0 0 4 3"><path d="M0.200 2.800h3.600L2 0.400z" fill="#8a8a8a"/></svg>
<svg style="left:253px;top:431.400px" width="4" height="3" viewBox="0 0 4 3"><path d="M0.200 0.200h3.600L2 2.600z" fill="#8a8a8a"/></svg>
<div class="b" style="left:254.00px;top:325.50px;width:2.20px;height:102.50px;background:#8f8f8f;border-radius:1px;"></div>
<svg style="left:774px;top:190px" width="4.400" height="3.200" viewBox="0 0 4.400 3.200"><path d="M0.200 3h4L2.200 0.400z" fill="#9a9a9a"/></svg>
<div class="b" style="left:774.60px;top:361.00px;width:3.00px;height:16.40px;background:#a8a8a8;border-radius:1.500px;"></div>
<svg style="left:774.200px;top:396.600px" width="4" height="17" viewBox="0 0 4 17"><g fill="#9a9a9a"><path d="M0.200 0.400h3.600L2 2.800z"/><path d="M0.200 8.800h3.600L2 6.600zM0.200 10.800h3.600L2 8.600z"/><path d="M0.200 12.800h3.600L2 15zM0.200 14.800h3.600L2 17z"/></g></svg>
<div class="b" style="left:261.00px;top:421.80px;width:518.30px;height:0.80px;background:#343434;"></div>
<span class="t" style="top:426px;font-size:6px;line-height:7.5px;color:#bcbcbc;left:265.00px;transform:scaleX(0.9456);transform-origin:0 50%;">Нотатки до слайда</span>
<div class="b" style="left:163.50px;top:436.00px;width:615.80px;height:9.60px;background:#151515;"></div>
<span class="t" style="top:438px;font-size:4.8px;line-height:6.0px;color:#d0d0d0;left:167.60px;transform:scaleX(0.8661);transform-origin:0 50%;">Слайд 11 з 12</span>
<span class="t" style="top:438px;font-size:4.8px;line-height:6.0px;color:#d0d0d0;left:208.00px;transform:scaleX(0.8602);transform-origin:0 50%;">українська</span>
<svg style="left:235.200px;top:438.200px" width="5" height="5.600" viewBox="0 0 5 5.600"><circle cx="2.500" cy="1.700" r="1.400" fill="none" stroke="#d0d0d0" stroke-width="0.500"/><path d="M0.800 2.800l1.700 2.400 1.700-2.400" fill="none" stroke="#d0d0d0" stroke-width="0.500"/></svg>
<span class="t" style="top:438px;font-size:4.8px;line-height:6.0px;color:#d0d0d0;left:242.00px;transform:scaleX(0.8577);transform-origin:0 50%;">Спеціальні можливості: все добре</span>
<svg style="left:606px;top:438px" width="7" height="6" viewBox="0 0 7 6"><path d="M2 0.800h3M0.600 2.600h5.800M0.600 4h5.800M0.600 5.400h5.800" stroke="#d0d0d0" stroke-width="0.700"/></svg>
<span class="t" style="top:438px;font-size:4.8px;line-height:6.0px;color:#d0d0d0;left:613.60px;transform:scaleX(0.8127);transform-origin:0 50%;">Нотатки</span>
<div class="b" style="left:636.00px;top:436.40px;width:15.60px;height:8.80px;background:#2e2e2e;"></div>
<svg style="left:640.500px;top:438.200px" width="7" height="5.400" viewBox="0 0 7 5.400"><rect x="0.400" y="0.400" width="6.200" height="4.600" fill="none" stroke="#e8e8e8" stroke-width="0.700"/><rect x="2.600" y="1.400" width="3.200" height="2.600" fill="#e8e8e8"/></svg>
<svg style="left:657px;top:438.200px" width="7" height="5.400" viewBox="0 0 7 5.400"><g fill="none" stroke="#cfcfcf" stroke-width="0.600"><rect x="0.400" y="0.400" width="2.600" height="1.800"/><rect x="4" y="0.400" width="2.600" height="1.800"/><rect x="0.400" y="3.200" width="2.600" height="1.800"/><rect x="4" y="3.200" width="2.600" height="1.800"/></g></svg>
<svg style="left:673px;top:438.200px" width="6.400" height="5.400" viewBox="0 0 6.400 5.400"><g fill="none" stroke="#cfcfcf" stroke-width="0.600"><rect x="0.400" y="0.400" width="5.600" height="4.600"/><path d="M2.200 0.400v4.600M4.200 0.400v4.600M0.400 3.600h5.600"/></g></svg>
<svg style="left:689px;top:438px" width="6.400" height="6" viewBox="0 0 6.400 6"><g fill="none" stroke="#cfcfcf" stroke-width="0.600"><path d="M0.200 0.500h6"/><rect x="0.800" y="0.800" width="4.800" height="2.800"/><path d="M3.200 3.800v1.600M2 5.600h2.400"/></g></svg>
<div class="b" style="left:702.60px;top:440.50px;width:2.80px;height:0.80px;background:#dcdcdc;"></div>
<div class="b" style="left:709.00px;top:440.60px;width:39.00px;height:0.60px;background:#7a7a7a;"></div>
<div class="b" style="left:727.50px;top:439.70px;width:0.60px;height:2.40px;background:#7a7a7a;"></div>
<div class="b" style="left:717.20px;top:438.20px;width:1.60px;height:5.40px;background:#d6d6d6;"></div>
<div class="b" style="left:749.60px;top:440.50px;width:2.80px;height:0.80px;background:#dcdcdc;"></div>
<div class="b" style="left:750.60px;top:439.50px;width:0.80px;height:2.80px;background:#dcdcdc;"></div>
<span class="t" style="top:438px;font-size:4.8px;line-height:6.0px;color:#d0d0d0;left:757.50px;transform:scaleX(0.9888);transform-origin:0 50%;">47%</span>
<svg style="left:771.600px;top:438px" width="6" height="6" viewBox="0 0 6 6"><g fill="none" stroke="#cfcfcf" stroke-width="0.600"><rect x="1.200" y="1.200" width="3.600" height="3.600"/><path d="M3 0v1.600M3 4.400V6M0 3h1.600M4.400 3H6"/></g></svg>
<div class="b" style="left:177.3px;top:188.2px;width:66px;height:7px;background:#fdfefe;overflow:hidden;">

</div>
<div class="b" style="left:177.3px;top:204px;width:66px;height:37.2px;background:#fdfefe;overflow:hidden;">
<div class="b" style="left:2px;top:3px;width:3.500px;height:3.500px;border-radius:50%;background:linear-gradient(135deg,#2a9ac8,#d8e060);"></div>
<div class="b" style="left:5.400px;top:1.600px;width:1.600px;height:1.600px;border-radius:50%;background:#8ad4b8;"></div>
<div class="b" style="left:1px;top:18px;width:9px;height:9px;border-radius:50%;background:#e4f3ee;"></div>
<div class="b" style="left:4px;top:13px;width:5px;height:5px;border-radius:50%;background:#e6f4f0;"></div>
<span class="t" style="left:3.400px;top:27.500px;font-size:5.600px;line-height:7px;color:#18a3a0;font-weight:bold;">8</span><div class="b" style="left:14px;top:2.200px;width:44px;height:1.200px;background:#5a6f98;opacity:.7"></div>
<div class="b" style="left:16px;top:6px;width:46px;height:5px;border-radius:1.500px;background:#5cc6c8;border:0.4px solid #3f8f9f;"></div>
<div class="b" style="left:20px;top:7.400px;width:38px;height:1.400px;background:#e6f060;opacity:.8"></div>
<div class="b" style="left:11px;top:11.600px;width:53px;height:10.500px;border-radius:1.500px;background:#5cc6c8;border:0.4px solid #3f8f9f;"></div>
<div class="b" style="left:13px;top:13px;width:26px;height:1.500px;background:#fff;opacity:.9"></div>
<div class="b" style="left:13px;top:16px;width:49px;height:1.200px;background:#fff;opacity:.6"></div>
<div class="b" style="left:13px;top:18.600px;width:49px;height:1.200px;background:#fff;opacity:.6"></div>
<div class="b" style="left:13.500px;top:23px;width:48px;height:11.500px;background:repeating-linear-gradient(180deg,#e8e8ee 0,#e8e8ee 1.400px,#fbfbfd 1.400px,#fbfbfd 2.800px);border:0.400px solid #b8b8c8;"></div>
<div class="b" style="left:15.500px;top:27px;width:7px;height:6px;background:#a8b4d0;"></div>
<div class="b" style="left:52px;top:27.500px;width:8px;height:5px;background:#c8ccd8;"></div>
</div>
<span class="t" style="top:204px;font-size:5.6px;line-height:7.0px;color:#cfcfcf;left:166.00px;transform:scaleX(0.9990);transform-origin:0 50%;">8</span>
<div class="b" style="left:177.3px;top:249.4px;width:66px;height:37.2px;background:#fdfefe;overflow:hidden;">
<div class="b" style="left:2px;top:3px;width:3.500px;height:3.500px;border-radius:50%;background:linear-gradient(135deg,#2a9ac8,#d8e060);"></div>
<div class="b" style="left:5.400px;top:1.600px;width:1.600px;height:1.600px;border-radius:50%;background:#8ad4b8;"></div>
<div class="b" style="left:1px;top:18px;width:9px;height:9px;border-radius:50%;background:#e4f3ee;"></div>
<div class="b" style="left:4px;top:13px;width:5px;height:5px;border-radius:50%;background:#e6f4f0;"></div>
<span class="t" style="left:3.400px;top:27.500px;font-size:5.600px;line-height:7px;color:#18a3a0;font-weight:bold;">9</span><div class="b" style="left:13px;top:2.200px;width:48px;height:1.200px;background:#5a6f98;opacity:.7"></div>
<div class="b" style="left:15px;top:6.400px;width:20px;height:6.800px;border-radius:1.500px;background:#5cc6c8;border:0.4px solid #3f8f9f;"></div>
<div class="b" style="left:18px;top:9.400px;width:14px;height:1.500px;background:#e6f060;opacity:.85"></div>
<div class="b" style="left:43px;top:6.400px;width:19px;height:6.800px;border-radius:1.500px;background:#5cc6c8;border:0.4px solid #3f8f9f;"></div>
<div class="b" style="left:46px;top:9.400px;width:12px;height:1.500px;background:#e6f060;opacity:.85"></div>
<div class="b" style="left:13.500px;top:16.500px;width:22px;height:12px;border-radius:2px;background:#5cc6c8;border:0.4px solid #3f8f9f;"></div>
<div class="b" style="left:15.500px;top:18.500px;width:18px;height:8px;background:repeating-linear-gradient(180deg,rgba(255,255,255,.75) 0,rgba(255,255,255,.75) 1.200px,transparent 1.200px,transparent 2.300px);"></div>
<div class="b" style="left:39px;top:16.500px;width:25.500px;height:18.500px;border-radius:2.500px;background:#5cc6c8;border:0.4px solid #3f8f9f;"></div>
<div class="b" style="left:41.500px;top:19px;width:21px;height:13px;background:repeating-linear-gradient(180deg,rgba(255,255,255,.7) 0,rgba(255,255,255,.7) 1.200px,transparent 1.200px,transparent 2.300px);"></div>
</div>
<span class="t" style="top:250px;font-size:5.6px;line-height:7.0px;color:#cfcfcf;left:166.00px;transform:scaleX(0.9990);transform-origin:0 50%;">9</span>
<div class="b" style="left:177.3px;top:294.9px;width:66px;height:37.2px;background:#fdfefe;overflow:hidden;">
<div class="b" style="left:2px;top:3px;width:3.500px;height:3.500px;border-radius:50%;background:linear-gradient(135deg,#2a9ac8,#d8e060);"></div>
<div class="b" style="left:5.400px;top:1.600px;width:1.600px;height:1.600px;border-radius:50%;background:#8ad4b8;"></div>
<div class="b" style="left:1px;top:18px;width:9px;height:9px;border-radius:50%;background:#e4f3ee;"></div>
<div class="b" style="left:4px;top:13px;width:5px;height:5px;border-radius:50%;background:#e6f4f0;"></div>
<span class="t" style="left:3.400px;top:27.500px;font-size:5.600px;line-height:7px;color:#18a3a0;font-weight:bold;">10</span><div class="b" style="left:15px;top:2.200px;width:46px;height:1.200px;background:#5a6f98;opacity:.7"></div>
<div class="b" style="left:17px;top:5.400px;width:43px;height:5px;border-radius:1.500px;background:#5cc6c8;border:0.4px solid #3f8f9f;"></div>
<div class="b" style="left:21px;top:6.800px;width:35px;height:1.400px;background:#e6f060;opacity:.8"></div>
<div class="b" style="left:12px;top:11.400px;width:52px;height:10.500px;border-radius:1.500px;background:#5cc6c8;border:0.4px solid #3f8f9f;"></div>
<div class="b" style="left:14px;top:13px;width:48px;height:7.500px;background:repeating-linear-gradient(180deg,rgba(255,255,255,.75) 0,rgba(255,255,255,.75) 1.200px,transparent 1.200px,transparent 2.400px);"></div>
<div class="b" style="left:13.500px;top:23px;width:49px;height:11.500px;background:repeating-linear-gradient(90deg,#f4f4f8 0,#f4f4f8 7px,#c8c8d4 7px,#c8c8d4 7.500px);border:0.400px solid #b8b8c8;"></div>
<div class="b" style="left:13.500px;top:26.500px;width:49px;height:0.500px;background:#b8b8c8;"></div>
</div>
<span class="t" style="top:295px;font-size:5.6px;line-height:7.0px;color:#cfcfcf;left:166.00px;transform:scaleX(0.9990);transform-origin:0 50%;">10</span>
<div class="b" style="left:177.3px;top:386.1px;width:66px;height:37.2px;background:#fdfefe;overflow:hidden;">
<div class="b" style="left:2px;top:3px;width:3.500px;height:3.500px;border-radius:50%;background:linear-gradient(135deg,#2a9ac8,#d8e060);"></div>
<div class="b" style="left:5.400px;top:1.600px;width:1.600px;height:1.600px;border-radius:50%;background:#8ad4b8;"></div>
<div class="b" style="left:1px;top:18px;width:9px;height:9px;border-radius:50%;background:#e4f3ee;"></div>
<div class="b" style="left:4px;top:13px;width:5px;height:5px;border-radius:50%;background:#e6f4f0;"></div>
<span class="t" style="left:3.400px;top:27.500px;font-size:5.600px;line-height:7px;color:#18a3a0;font-weight:bold;">12</span><div class="b" style="left:22px;top:5.500px;width:18px;height:1.200px;background:#4a5f8a;opacity:.8"></div>
<div class="b" style="left:21px;top:10.400px;width:14px;height:1.100px;background:#3ab0b0;opacity:.8"></div><div class="b" style="left:36px;top:10.200px;width:10px;height:1.400px;background:#1e3e78;"></div>
<div class="b" style="left:15px;top:14px;width:38px;height:1px;background:#5ab8c0;opacity:.7"></div>
<div class="b" style="left:22px;top:17px;width:22px;height:1px;background:#5a6f98;opacity:.7"></div>
<div class="b" style="left:19px;top:21.200px;width:16px;height:1px;background:#3ab0b0;opacity:.8"></div><div class="b" style="left:36px;top:21px;width:12px;height:1.300px;background:#1e3e78;"></div>
<div class="b" style="left:23px;top:25px;width:20px;height:1px;background:#5a6f98;opacity:.7"></div>
<div class="b" style="left:26px;top:29px;width:10px;height:1px;background:#3ab0b0;opacity:.8"></div>
<div class="b" style="left:20px;top:31.600px;width:24px;height:1px;background:#5a6f98;opacity:.7"></div>
</div>
<span class="t" style="top:386px;font-size:5.6px;line-height:7.0px;color:#cfcfcf;left:166.00px;transform:scaleX(0.9990);transform-origin:0 50%;">12</span>
<div class="b" style="left:175.80px;top:338.90px;width:69.00px;height:40.20px;border:1px solid #dfa58c;border-radius:1.500px;background:#0a0a0a;"></div>
<div class="b" style="left:177.3px;top:340.4px;width:66px;height:37.2px;background:#fdfefe;overflow:hidden;">
<div style="position:absolute;left:0;top:0;width:399.0px;height:224.5px;transform:scale(0.1654);transform-origin:0 0;"><div class="b" style="left:70.20px;top:31.20px;width:305.60px;height:173.40px;background:#5cc6c8;border-radius:26px;border:3px solid #2a6f86;"></div>
<span class="t" style="top:10px;font-size:11.8px;line-height:14.75px;color:#1e3e78;font-weight:bold;left:131.50px;transform:scaleX(0.9020);transform-origin:0 50%;">Фінансовий чек-лист (самоперевірка)</span>
<div class="b" style="left:83.80px;top:46.80px;width:12.00px;height:12.00px;border-radius:50%;background:#48699d;"></div>
<div class="b" style="left:346.00px;top:47.80px;width:11.00px;height:10.00px;border:2px solid #12995a;"></div>
<div class="b" style="left:83.80px;top:70.80px;width:12.00px;height:12.00px;border-radius:50%;background:#48699d;"></div>
<div class="b" style="left:346.00px;top:71.80px;width:11.00px;height:10.00px;border:2px solid #12995a;"></div>
<div class="b" style="left:83.80px;top:100.60px;width:12.00px;height:12.00px;border-radius:50%;background:#48699d;"></div>
<div class="b" style="left:346.00px;top:101.60px;width:11.00px;height:10.00px;border:2px solid #12995a;"></div>
<div class="b" style="left:83.80px;top:131.00px;width:12.00px;height:12.00px;border-radius:50%;background:#48699d;"></div>
<div class="b" style="left:346.00px;top:132.00px;width:11.00px;height:10.00px;border:2px solid #12995a;"></div>
<div class="b" style="left:83.80px;top:162.60px;width:12.00px;height:12.00px;border-radius:50%;background:#48699d;"></div>
<div class="b" style="left:346.00px;top:163.60px;width:11.00px;height:10.00px;border:2px solid #12995a;"></div>
<div class="b" style="left:83.80px;top:184.90px;width:12.00px;height:12.00px;border-radius:50%;background:#48699d;"></div>
<div class="b" style="left:346.00px;top:185.90px;width:11.00px;height:10.00px;border:2px solid #12995a;"></div>
<div class="b" style="left:102.60px;top:45.10px;width:241.00px;height:3.60px;background:rgba(255,255,255,0.55);"></div>
<div class="b" style="left:102.60px;top:53.30px;width:241.00px;height:3.60px;background:rgba(255,255,255,0.55);"></div>
<div class="b" style="left:102.60px;top:69.10px;width:241.00px;height:3.60px;background:rgba(255,255,255,0.55);"></div>
<div class="b" style="left:102.60px;top:77.10px;width:241.00px;height:3.60px;background:rgba(255,255,255,0.55);"></div>
<div class="b" style="left:102.60px;top:100.30px;width:241.00px;height:3.60px;background:rgba(255,255,255,0.55);"></div>
<div class="b" style="left:102.60px;top:108.40px;width:241.00px;height:3.60px;background:rgba(255,255,255,0.55);"></div>
<div class="b" style="left:102.60px;top:116.50px;width:241.00px;height:3.60px;background:rgba(255,255,255,0.55);"></div>
<div class="b" style="left:102.60px;top:131.90px;width:241.00px;height:3.60px;background:rgba(255,255,255,0.55);"></div>
<div class="b" style="left:102.60px;top:140.10px;width:241.00px;height:3.60px;background:rgba(255,255,255,0.55);"></div>
<div class="b" style="left:102.60px;top:148.30px;width:241.00px;height:3.60px;background:rgba(255,255,255,0.55);"></div>
<div class="b" style="left:102.60px;top:163.90px;width:241.00px;height:3.60px;background:rgba(255,255,255,0.55);"></div>
<div class="b" style="left:102.60px;top:172.20px;width:241.00px;height:3.60px;background:rgba(255,255,255,0.55);"></div>
<div class="b" style="left:102.60px;top:188.20px;width:241.00px;height:3.60px;background:rgba(255,255,255,0.55);"></div>
<span class="t" style="left:17.95px;top:164px;font-size:33.8px;line-height:42.25px;letter-spacing:-5.62px;font-weight:bold;color:#18a3a0;transform:scaleX(1.267);transform-origin:0 50%;clip-path:polygon(0 0,40px 0,40px 28.6px,24px 28.6px,24px 45px,18.7px 45px,18.7px 28.6px,12.65px 28.6px,12.65px 45px,7.35px 45px,7.35px 28.6px,0 28.6px);">11</span>
<div class="b" style="left:26.00px;top:29.00px;width:20.00px;height:20.00px;border-radius:50%;background:linear-gradient(135deg,#2a9ac8,#d8e060);"></div>
<div class="b" style="left:46.00px;top:10.00px;width:10.00px;height:10.00px;border-radius:50%;background:#8ad4b8;"></div>
<div class="b" style="left:1.00px;top:132.00px;width:50.00px;height:50.00px;border-radius:50%;background:#e4f3ee;"></div>
<div class="b" style="left:29.00px;top:98.00px;width:28.00px;height:28.00px;border-radius:50%;background:#e6f4f0;"></div></div>
</div>
<span class="t" style="top:341px;font-size:5.6px;line-height:7.0px;color:#cfcfcf;left:165.60px;transform:scaleX(0.9990);transform-origin:0 50%;">11</span>
<div class="b" style="left:317.2px;top:192px;width:399.0px;height:224.5px;background:#fefefe;overflow:hidden;">
<svg style="left:0px;top:84.8px" width="110" height="140" viewBox="0 0 110 140">
<defs><filter id="blW" x="-20%" y="-20%" width="140%" height="140%"><feGaussianBlur stdDeviation="0.700"/></filter></defs>
<g filter="url(#blW)">
<path d="M53.600 18.200L47.200 59.700L22.700 99.600L79.100 125.100M14.400 56.500L22.700 99.600" fill="none" stroke="#dff0f0" stroke-width="2.400"/>
<circle cx="53.600" cy="18.200" r="9" fill="#e4f4ec"/>
<circle cx="47.200" cy="59.700" r="17.500" fill="#e3f3ec"/>
<circle cx="14.400" cy="56.500" r="7.700" fill="#daeef3"/>
<circle cx="22.700" cy="99.600" r="20.700" fill="#e2f3eb"/>
<circle cx="79.100" cy="125.100" r="9.600" fill="#d9edf5"/>
</g></svg>
<svg style="left:0px;top:0.8px" width="70" height="75" viewBox="0 0 70 75">
<defs><linearGradient id="lgm" x1="0" y1="0" x2="1" y2="1"><stop offset="0" stop-color="#1f8fc0"/><stop offset="0.450" stop-color="#35b7a6"/><stop offset="0.750" stop-color="#c6d85a"/><stop offset="1" stop-color="#f4e04a"/></linearGradient>
<linearGradient id="lgg" x1="0" y1="0" x2="1" y2="1"><stop offset="0" stop-color="#6cc8b0"/><stop offset="1" stop-color="#a8dcb4"/></linearGradient>
<filter id="blL" x="-20%" y="-20%" width="140%" height="140%"><feGaussianBlur stdDeviation="0.350"/></filter></defs>
<g filter="url(#blL)">
<path d="M35.100 39.200L52.100 14.900" stroke="#5cc0a4" stroke-width="1.300"/>
<path d="M35.100 39.200L16.300 34.500" stroke="#3fa8cc" stroke-width="1.300"/>
<path d="M35.100 39.200L42.600 63.500" stroke="#e2e070" stroke-width="1.300"/>
<circle cx="52.100" cy="14.900" r="5.400" fill="url(#lgg)"/>
<circle cx="16.300" cy="34.500" r="4.500" fill="#52b4d8"/>
<circle cx="42.600" cy="63.500" r="2.900" fill="#f0eb9c"/>
<circle cx="35.100" cy="39.200" r="9.300" fill="url(#lgm)"/>
<circle cx="35.700" cy="39.600" r="3.700" fill="#fff"/>
<path d="M38.900 37.300c1.800 1.700 1.200 4.900-1.200 5.600 1.300-1.300 1.300-3.300-0.200-4.200-1.200-0.700-2.600-0.100-3 1 -0.300-1.800 2.400-3.800 4.400-2.400z" fill="#8fd0a8"/>
</g></svg>
<svg style="left:108.800px;top:9px" width="14" height="17" viewBox="0 0 14 17"><rect x="0.900" y="2.200" width="12" height="14" rx="0.800" fill="#f4f7fb" stroke="#3a5890" stroke-width="0.900"/><rect x="4.400" y="0.600" width="5" height="3" rx="0.800" fill="#27457f"/><path d="M6.200 6h4.600M6.200 8.600h4.600M6.200 11.200h4.600M6.200 13.600h4.600" stroke="#27457f" stroke-width="0.900"/><path d="M2.800 5.800l0.800 0.800 1.200-1.500M2.800 8.400l0.800 0.800 1.200-1.500M2.800 11l0.800 0.800 1.200-1.500M2.800 13.400l0.800 0.800 1.200-1.500" stroke="#27457f" stroke-width="0.600" fill="none"/></svg>
<span class="t" style="top:11px;font-size:11.8px;line-height:14.75px;color:#1e3e78;font-weight:bold;left:131.50px;transform:scaleX(0.9020);transform-origin:0 50%;">Фінансовий чек-лист (самоперевірка)</span>
<div class="b" style="left:245.30px;top:23.30px;width:85.70px;height:0.90px;background:#1e3e78;"></div>
<div class="b" style="left:70.20px;top:32.00px;width:305.60px;height:173.40px;background:#5fcecb;border-radius:31px;border:0.8px solid #2d6f8e;border-right-color:#3a7f98;border-bottom-color:#4aa0b0;box-shadow:-0.3px -0.3px 0.6px rgba(20,50,90,0.35);"></div>
<div class="b" style="left:83.70px;top:46.90px;width:12.60px;height:12.60px;border-radius:50%;background:#48699d;"></div>
<span class="t" style="top:49px;font-size:8px;line-height:10.0px;color:#b4cdec;left:87.58px;transform:scaleX(0.9990);transform-origin:50% 50%;">1</span>
<div class="b" style="left:83.70px;top:70.90px;width:12.60px;height:12.60px;border-radius:50%;background:#48699d;"></div>
<span class="t" style="top:73px;font-size:8px;line-height:10.0px;color:#b4cdec;left:87.58px;transform:scaleX(0.9990);transform-origin:50% 50%;">2</span>
<div class="b" style="left:83.70px;top:100.80px;width:12.60px;height:12.60px;border-radius:50%;background:#48699d;"></div>
<span class="t" style="top:103px;font-size:8px;line-height:10.0px;color:#b4cdec;left:87.58px;transform:scaleX(0.9990);transform-origin:50% 50%;">3</span>
<div class="b" style="left:83.70px;top:131.20px;width:12.60px;height:12.60px;border-radius:50%;background:#48699d;"></div>
<span class="t" style="top:133px;font-size:8px;line-height:10.0px;color:#b4cdec;left:87.58px;transform:scaleX(0.9990);transform-origin:50% 50%;">4</span>
<div class="b" style="left:83.70px;top:162.80px;width:12.60px;height:12.60px;border-radius:50%;background:#48699d;"></div>
<span class="t" style="top:165px;font-size:8px;line-height:10.0px;color:#b4cdec;left:87.58px;transform:scaleX(0.9990);transform-origin:50% 50%;">5</span>
<div class="b" style="left:83.70px;top:185.00px;width:12.60px;height:12.60px;border-radius:50%;background:#48699d;"></div>
<span class="t" style="top:187px;font-size:8px;line-height:10.0px;color:#b4cdec;left:87.58px;transform:scaleX(0.9990);transform-origin:50% 50%;">6</span>
<span class="t" style="left:102.60px;top:43px;font-size:6.4px;line-height:8.0px;color:#fff;word-spacing:1.267px;transform:scaleX(0.985);transform-origin:0 50%;font-weight:bold;">числові означення трьох фінансових документів мають відповідати один</span>
<span class="t" style="top:51px;font-size:6.4px;line-height:8.0px;color:#fff;font-weight:bold;left:102.60px;transform:scaleX(0.9990);transform-origin:0 50%;transform:scaleX(0.985);transform-origin:0 50%;">одному;</span>
<span class="t" style="left:102.60px;top:68px;font-size:6.4px;line-height:8.0px;color:#fff;word-spacing:0.842px;transform:scaleX(0.985);transform-origin:0 50%;font-weight:bold;">фінансові розрахунки здійснюються відповідно до орієнтовної тривалості</span>
<span class="t" style="top:75px;font-size:6.4px;line-height:8.0px;color:#fff;font-weight:bold;left:102.60px;transform:scaleX(0.9990);transform-origin:0 50%;">виконання кожного  проміжного етапів – визначених умовами конкурсу;</span>
<span class="t" style="left:102.60px;top:99px;font-size:6.4px;line-height:8.0px;color:#fff;word-spacing:3.987px;transform:scaleX(0.985);transform-origin:0 50%;font-weight:bold;">розмір щомісячної оплати праці наукового керівника, виконавців та</span>
<span class="t" style="left:102.60px;top:107px;font-size:6.4px;line-height:8.0px;color:#fff;word-spacing:0.447px;transform:scaleX(0.985);transform-origin:0 50%;font-weight:bold;">допоміжного персоналу проєкту не перевищує рекомендованих означень в</span>
<span class="t" style="top:115px;font-size:6.4px;line-height:8.0px;color:#fff;font-weight:bold;left:102.60px;transform:scaleX(0.9990);transform-origin:0 50%;transform:scaleX(0.985);transform-origin:0 50%;">Методичних рекомендаціях;</span>
<span class="t" style="left:102.60px;top:131px;font-size:6.4px;line-height:8.0px;color:#fff;word-spacing:0.974px;transform:scaleX(0.985);transform-origin:0 50%;font-weight:bold;">якщо запланована закупівля обладнання/устаткування вартістю понад 200</span>
<span class="t" style="left:102.60px;top:139px;font-size:6.4px;line-height:8.0px;color:#fff;word-spacing:2.464px;transform:scaleX(0.985);transform-origin:0 50%;font-weight:bold;">тис грн за одиницю, додано документ, який містить детальне техніко-</span>
<span class="t" style="top:147px;font-size:6.4px;line-height:8.0px;color:#fff;font-weight:bold;left:102.60px;transform:scaleX(0.9858);transform-origin:0 50%;">економічне обґрунтування (ТЕО) та відповідні комерційні пропозиції;</span>
<span class="t" style="left:102.60px;top:163px;font-size:6.4px;line-height:8.0px;color:#fff;word-spacing:2.050px;transform:scaleX(0.985);transform-origin:0 50%;font-weight:bold;">відсоткові співвідношення відповідають визначеним розмірам в Умовах</span>
<span class="t" style="top:171px;font-size:6.4px;line-height:8.0px;color:#fff;font-weight:bold;left:102.60px;transform:scaleX(0.9990);transform-origin:0 50%;transform:scaleX(0.985);transform-origin:0 50%;">конкурсу;</span>
<span class="t" style="top:186px;font-size:6.4px;line-height:8.0px;color:#fff;font-weight:bold;left:102.60px;transform:scaleX(0.9931);transform-origin:0 50%;">усі фінансові показники Заявки заявлені в гривнях</span>
<svg style="left:345.60px;top:45.80px" width="12.400" height="11.400" viewBox="0 0 12.400 11.400"><rect x="0.900" y="0.900" width="10.600" height="9.600" fill="#5fcfd0" stroke="#12995a" stroke-width="1.500"/><path d="M3.200 5.600l2.200 2.300 4-4.600" fill="none" stroke="#12995a" stroke-width="1.500"/></svg>
<svg style="left:345.60px;top:71.10px" width="12.400" height="11.400" viewBox="0 0 12.400 11.400"><rect x="0.900" y="0.900" width="10.600" height="9.600" fill="#5fcfd0" stroke="#12995a" stroke-width="1.500"/><path d="M3.200 5.600l2.200 2.300 4-4.600" fill="none" stroke="#12995a" stroke-width="1.500"/></svg>
<svg style="left:345.60px;top:99.50px" width="12.400" height="11.400" viewBox="0 0 12.400 11.400"><rect x="0.900" y="0.900" width="10.600" height="9.600" fill="#5fcfd0" stroke="#12995a" stroke-width="1.500"/><path d="M3.200 5.600l2.200 2.300 4-4.600" fill="none" stroke="#12995a" stroke-width="1.500"/></svg>
<svg style="left:345.60px;top:130.90px" width="12.400" height="11.400" viewBox="0 0 12.400 11.400"><rect x="0.900" y="0.900" width="10.600" height="9.600" fill="#5fcfd0" stroke="#12995a" stroke-width="1.500"/><path d="M3.200 5.600l2.200 2.300 4-4.600" fill="none" stroke="#12995a" stroke-width="1.500"/></svg>
<svg style="left:345.60px;top:163.90px" width="12.400" height="11.400" viewBox="0 0 12.400 11.400"><rect x="0.900" y="0.900" width="10.600" height="9.600" fill="#5fcfd0" stroke="#12995a" stroke-width="1.500"/><path d="M3.200 5.600l2.200 2.300 4-4.600" fill="none" stroke="#12995a" stroke-width="1.500"/></svg>
<svg style="left:345.60px;top:187.20px" width="12.400" height="11.400" viewBox="0 0 12.400 11.400"><rect x="0.900" y="0.900" width="10.600" height="9.600" fill="#5fcfd0" stroke="#12995a" stroke-width="1.500"/><path d="M3.200 5.600l2.200 2.300 4-4.600" fill="none" stroke="#12995a" stroke-width="1.500"/></svg>
<span class="t" style="left:17.95px;top:164px;font-size:33.8px;line-height:42.25px;letter-spacing:-5.62px;font-weight:bold;color:#18a3a0;transform:scaleX(1.267);transform-origin:0 50%;clip-path:polygon(0 0,40px 0,40px 28.6px,24px 28.6px,24px 45px,18.7px 45px,18.7px 28.6px,12.65px 28.6px,12.65px 45px,7.35px 45px,7.35px 28.6px,0 28.6px);">11</span>
<div class="b" style="left:0.00px;top:0.00px;width:399.00px;height:1.00px;background:rgba(10,10,10,0.6);"></div>
</div>
<svg style="left:703.600px;top:240.200px" width="5" height="7" viewBox="0 0 5 7"><path d="M0.400 0.300v5.400l1.300-1.200 0.900 2 0.800-0.400-0.900-1.900h1.700z" fill="#fff" stroke="#444" stroke-width="0.400"/></svg>
<div class="b" style="left:7.40px;top:455.00px;width:20.00px;height:20.00px;border-radius:50%;border:1px solid #6a6a6a;"></div>
<svg style="left:12.400px;top:460.800px" width="10" height="9" viewBox="0 0 10 9"><path d="M1.600 0.600h6.800a1 1 0 0 1 1 1v4a1 1 0 0 1-1 1H4L2 8.200V6.600h-0.400a1 1 0 0 1-1-1v-4a1 1 0 0 1 1-1z" fill="none" stroke="#e8e8e8" stroke-width="0.900"/><path d="M2.800 2.800h1.800v1.600H2.800zM5.600 2.800h1.800v1.600H5.600z" fill="none" stroke="#e8e8e8" stroke-width="0.700"/></svg>
<div class="b" style="left:248.40px;top:455.00px;width:138.90px;height:20.00px;border-radius:10px;border:1px solid #6a6a6a;"></div>
<div class="b" style="left:367.20px;top:455.50px;width:0.80px;height:19.00px;background:#555;"></div>
<svg style="left:259px;top:460.500px" width="8" height="10" viewBox="0 0 8 10"><g fill="none" stroke="#f47a8a" stroke-width="0.900" stroke-linecap="round"><rect x="2.800" y="0.700" width="2.400" height="5" rx="1.200"/><path d="M1.300 4.600c0 3.400 5.400 3.400 5.400 0M4 7.200v1.600M2.300 8.900h3.400M0.800 0.800l6.200 7.600"/></g></svg>
<span class="t" style="top:460px;font-size:9px;line-height:11.25px;color:#fff;font-weight:bold;left:274.40px;transform:scaleX(0.8746);transform-origin:0 50%;">Включить микрофон</span>
<svg style="left:373.400px;top:462.900px" width="8" height="5" viewBox="0 0 8 5"><path d="M0.800 0.800L4 4l3.200-3.200" fill="none" stroke="#e8e8e8" stroke-width="1"/></svg>
<div class="b" style="left:391.50px;top:455.00px;width:124.00px;height:20.00px;border-radius:10px;border:1px solid #6a6a6a;"></div>
<div class="b" style="left:495.20px;top:455.50px;width:0.80px;height:19.00px;background:#555;"></div>
<svg style="left:400.600px;top:461.100px" width="10" height="9" viewBox="0 0 10 9"><g fill="none" stroke="#f47a8a" stroke-width="0.900" stroke-linecap="round"><rect x="0.800" y="1.600" width="6" height="5.400" rx="1"/><path d="M6.800 3.600l2.400-1.400v4.400L6.800 5.200M0.600 0.600l7.200 7.600"/></g></svg>
<span class="t" style="top:460px;font-size:9px;line-height:11.25px;color:#fff;font-weight:bold;left:417.70px;transform:scaleX(0.8844);transform-origin:0 50%;">Запустить видео</span>
<svg style="left:501.400px;top:462.900px" width="8" height="5" viewBox="0 0 8 5"><path d="M0.800 0.800L4 4l3.200-3.200" fill="none" stroke="#e8e8e8" stroke-width="1"/></svg>
<div class="b" style="left:524.00px;top:455.00px;width:77.00px;height:20.00px;border-radius:10px;border:1px solid #6a6a6a;"></div>
<svg style="left:532.400px;top:461px" width="9" height="9" viewBox="0 0 9 9"><defs><linearGradient id="aig" x1="0" y1="1" x2="1" y2="0"><stop offset="0" stop-color="#1a6af0"/><stop offset="1" stop-color="#2fe0d0"/></linearGradient></defs><circle cx="4.500" cy="4.500" r="3.300" fill="none" stroke="url(#aig)" stroke-width="1.800"/><circle cx="6.600" cy="2.400" r="1.300" fill="#8af0ff"/></svg>
<span class="t" style="top:460px;font-size:9px;line-height:11.25px;color:#fff;font-weight:bold;left:545.60px;transform:scaleX(0.9114);transform-origin:0 50%;">AI Assistant</span>
<div class="b" style="left:605.20px;top:455.00px;width:40.60px;height:20.00px;border-radius:10px;border:1px solid #6a6a6a;"></div>
<div class="b" style="left:625.40px;top:455.50px;width:0.80px;height:19.00px;background:#555;"></div>
<svg style="left:612.600px;top:460.800px" width="7" height="9" viewBox="0 0 7 9"><path d="M1 4.400c0-2.400 1-3.600 2.500-3.600S6 2 6 4.400v2.200c0 1.200-1 1.800-2.500 1.800S1 7.800 1 6.600zM2.600 3v3.400M4.400 3v3.400" fill="none" stroke="#bdbdbd" stroke-width="0.800"/></svg>
<svg style="left:631.400px;top:460.800px" width="9" height="9" viewBox="0 0 9 9"><circle cx="4.500" cy="4.600" r="3.700" fill="none" stroke="#d0d0d0" stroke-width="0.800"/><path d="M2.800 5.400c0.800 1.400 2.600 1.400 3.400 0M3.200 3.400v0.600M5.800 3.400v0.600" fill="none" stroke="#d0d0d0" stroke-width="0.700"/><path d="M7.400 0.400v2M6.400 1.400h2" stroke="#d0d0d0" stroke-width="0.600"/></svg>
<div class="b" style="left:650.10px;top:455.00px;width:20.00px;height:20.00px;border-radius:50%;border:1px solid #6a6a6a;"></div>
<div class="b" style="left:655.60px;top:464.30px;width:1.50px;height:1.50px;border-radius:50%;background:#a8a8a8;"></div>
<div class="b" style="left:659.30px;top:464.30px;width:1.50px;height:1.50px;border-radius:50%;background:#a8a8a8;"></div>
<div class="b" style="left:663.00px;top:464.30px;width:1.50px;height:1.50px;border-radius:50%;background:#a8a8a8;"></div>
<div class="b" style="left:674.00px;top:454.80px;width:20.00px;height:20.00px;border-radius:50%;background:#e2223a;"></div>
<svg style="left:680.800px;top:461.600px" width="6.400" height="6.400" viewBox="0 0 6.400 6.400"><path d="M0.700 0.700l5 5M5.700 0.700l-5 5" stroke="#fff" stroke-width="1.100" stroke-linecap="round"/></svg>
<svg style="left:871.500px;top:460px" width="10" height="10" viewBox="0 0 10 10"><g fill="none" stroke="#c8c8c8" stroke-width="0.800"><circle cx="4" cy="2.600" r="1.700"/><path d="M0.800 8.800V7.400c0-2.400 5.400-2.400 6 0M6.400 6.600h3M6.400 8h3M6.400 9.400h3"/></g></svg>
<svg style="left:896px;top:460px" width="10" height="10" viewBox="0 0 10 10"><path d="M5 1a4 4 0 1 1-2.200 7.300L0.900 9l0.600-1.900A4 4 0 0 1 5 1z" fill="none" stroke="#d0d0d0" stroke-width="0.900"/></svg>
<div class="b" style="left:905.70px;top:454.40px;width:6.00px;height:6.00px;border-radius:50%;background:#1d74e8;"></div>
<div class="b" style="left:921.60px;top:464.30px;width:1.40px;height:1.40px;border-radius:50%;background:#5c5c5c;"></div>
<div class="b" style="left:925.30px;top:464.30px;width:1.40px;height:1.40px;border-radius:50%;background:#5c5c5c;"></div>
<div class="b" style="left:929.00px;top:464.30px;width:1.40px;height:1.40px;border-radius:50%;background:#5c5c5c;"></div>
</div>

<div class="b" style="left:0;top:481px;width:942px;height:21px;background:#2c2d2f;overflow:hidden;">
<div class="b" style="left:0.00px;top:0.00px;width:143.00px;height:21.00px;background:#3d3e40;"></div>
<div class="b" style="left:0.00px;top:0.00px;width:942.00px;height:1.00px;background:#b9c1c8;"></div>
<svg style="left:4.500px;top:7px" width="9" height="9" viewBox="0 0 9 9"><circle cx="5.400" cy="3.400" r="2.500" fill="none" stroke="#e6e6e6" stroke-width="0.900"/><path d="M3.600 5.200L0.700 8.200" stroke="#e6e6e6" stroke-width="1"/></svg>
<span class="t" style="top:7px;font-size:8.2px;line-height:10.25px;color:#cfcfcf;left:20.50px;transform:scaleX(0.9594);transform-origin:0 50%;">Поиск</span>
<svg style="left:106px;top:2.700px" width="34" height="17" viewBox="0 0 34 17"><path d="M13 1c0.600 4 2 5.500 6 6.200-4 0.700-5.400 2.200-6 6.200-0.600-4-2-5.500-6-6.200 4-0.700 5.400-2.200 6-6.200z" fill="#f8c22a"/><path d="M24.500 5.800c0.400 2.500 1.200 3.400 3.700 3.800-2.500 0.400-3.300 1.300-3.700 3.800-0.400-2.500-1.200-3.400-3.700-3.800 2.500-0.400 3.300-1.300 3.700-3.800z" fill="#fad54a"/><path d="M3.800 9.800l0.500 1.400 1.400 0.500-1.400 0.500-0.500 1.400-0.500-1.400-1.400-0.500 1.400-0.500z" fill="#2f9cf0"/><circle cx="21.700" cy="2.400" r="0.900" fill="#e8622a"/><circle cx="31" cy="11.800" r="0.900" fill="#7ac43a"/></svg>
<svg style="left:150.400px;top:1.600px" width="18" height="18" viewBox="0 0 18 18"><defs><radialGradient id="ffg" cx="0.700" cy="0.150" r="1"><stop offset="0" stop-color="#fff26a"/><stop offset="0.300" stop-color="#ffbd2e"/><stop offset="0.600" stop-color="#ff6a2a"/><stop offset="1" stop-color="#e31f6c"/></radialGradient></defs><path d="M9 2.400c1-1.200 2-1.800 2.600-1.900 0 1.600 1.400 2.400 2.800 4.200 1.600 2 2.200 4 1.800 6.200-0.600 3.600-3.600 6.200-7.400 6.200S1.400 14.200 1.400 10.400c0-2 0.600-3.600 1.600-4.800 0 1 0.400 1.600 0.800 1.800C4 5 5.600 3.200 9 2.400z" fill="url(#ffg)"/><circle cx="8.600" cy="10.600" r="3.700" fill="#7a3ade"/><path d="M4.800 9.600c1.200-2 3.800-2 5.400-0.800-2-0.200-3 1.200-2.600 2.600-1 0.200-2.400-0.600-2.800-1.800z" fill="#ff8a2a"/><circle cx="9.400" cy="10.900" r="1.900" fill="#5a2ac8"/></svg>
<svg style="left:180.500px;top:4.800px" width="15" height="13" viewBox="0 0 15 13"><path d="M0.400 1.400c0-0.500 0.300-0.800 0.800-0.800h4l1.200 1.400h7.400c0.500 0 0.800 0.300 0.800 0.800V11H0.400z" fill="#f4b92c"/><path d="M0.400 4h14.200v7.400c0 0.500-0.300 0.800-0.800 0.800H1.200c-0.500 0-0.800-0.300-0.800-0.800z" fill="#fbd75a"/><rect x="4.200" y="7.600" width="6.600" height="4.600" fill="#2f86d8"/><rect x="5.800" y="9.600" width="3.400" height="2.600" fill="#fbd75a"/></svg>
<div class="b" style="left:203.00px;top:0.90px;width:26.60px;height:20.10px;background:#4a4b4d;"></div>
<svg style="left:208.600px;top:2.400px" width="16" height="16" viewBox="0 0 16 16"><rect x="0.300" y="0.300" width="15.400" height="15.400" rx="0.800" fill="#1c35c4"/><rect x="4" y="0.300" width="8" height="4.600" fill="#e8ecf8"/><rect x="8.800" y="1" width="2" height="3.200" fill="#1c35c4"/><rect x="2.200" y="7" width="11.600" height="8.600" fill="#f4f4f4"/><path d="M2.200 8.600h11.600M2.200 11h11.600M2.200 13.400h11.600" stroke="#d8283a" stroke-width="1.300"/><rect x="9.400" y="11.600" width="4.200" height="3.600" fill="#444"/></svg>
<svg style="left:237.200px;top:2.500px" width="16.400" height="16.400" viewBox="0 0 16 16"><circle cx="8" cy="8" r="7.600" fill="#fff"/><path d="M8 8L1.420 4.200A7.600 7.600 0 0 1 14.580 4.200z" fill="#e53a2f"/><path d="M8 8L14.580 4.200A7.600 7.600 0 0 1 8 15.600z" fill="#f7c52b"/><path d="M8 8L8 15.600A7.600 7.600 0 0 1 1.420 4.200z" fill="#2fa24a"/><circle cx="8" cy="8" r="3.600" fill="#fff"/><circle cx="8" cy="8" r="2.800" fill="#3a7be8"/></svg>
<div class="b" style="left:260.00px;top:0.90px;width:27.40px;height:20.10px;background:#7d7d7d;"></div>
<svg style="left:266px;top:2.600px" width="16" height="16" viewBox="0 0 16 16"><ellipse cx="8" cy="8" rx="7.500" ry="8.300" fill="#e01e2a"/><ellipse cx="8" cy="8" rx="3.100" ry="6" fill="#7d7d7d"/></svg>
<svg style="left:729.7px;top:6.7px" width="8.600" height="8.600" viewBox="0 0 10 10"><path d="M1 3c0-1.600 2-2.600 4-2.200 2 0.400 3 1 3.600 2.600L9.600 7c0 1.600-2 2.400-4 2.200C3.400 9 1.800 8.400 1 6.600z" fill="#8a4ad8"/><path d="M1 3c1-2 4-3 6-2l-1 5L1.600 7z" fill="#2fb6e8"/><path d="M4 6l5 0 0.500 1c-0.600 1.800-3 2.400-5 2z" fill="#f2b22a"/><path d="M5 2.600l3 0.600-0.600 3-3-0.400z" fill="#e84a8a"/></svg>
<div class="b" style="left:742.40px;top:7.40px;width:7.20px;height:7.20px;background:#1c8ee6;border-radius:1px;"></div>
<span class="t" style="top:9px;font-size:3.6px;line-height:4.5px;color:#fff;font-weight:bold;left:743.50px;transform:scaleX(0.9990);transform-origin:50% 50%;">RS</span>
<div class="b" style="left:754.40px;top:7.40px;width:7.20px;height:7.20px;background:#e23a3a;border-radius:1px;"></div>
<div class="b" style="left:756.20px;top:10.10px;width:3.60px;height:1.80px;background:#fff;border-radius:1px;"></div>
<svg style="left:765px;top:6px" width="10" height="10" viewBox="0 0 10 10"><rect x="0.600" y="1" width="5.600" height="4.400" fill="#2f7fd8"/><path d="M3.400 5.400v2M4 5l3 3.600M6.400 3.400l2.600 3" stroke="#d8d8d8" stroke-width="0.900"/><circle cx="7.800" cy="7.600" r="1.500" fill="#e8e8e8"/></svg>
<svg style="left:777px;top:6px" width="10" height="10" viewBox="0 0 10 10"><path d="M4.400 0.600L8 2v3c0 2-1.800 3.400-3.600 4C2.600 8.400 0.800 7 0.800 5V2z" fill="#f0f0f0"/><path d="M4.400 0.600V9M0.800 4.600H8" stroke="#444" stroke-width="0.600"/><circle cx="7.400" cy="7.400" r="2.100" fill="#e02a2a"/><path d="M6.500 6.500l1.800 1.800M8.300 6.500L6.500 8.300" stroke="#fff" stroke-width="0.600"/></svg>
<svg style="left:790px;top:6px" width="10" height="10" viewBox="0 0 10 10"><path d="M1 4c2-2 6-2 8 0.600L8 7.400H2z" fill="#8a8a8a"/><path d="M1 2l8 6" stroke="#c8c8c8" stroke-width="0.800"/></svg>
<svg style="left:802px;top:6px" width="10" height="10" viewBox="0 0 10 10"><path d="M1.400 6.400l3-2.400 1.600 1.200L8.600 3" stroke="#d0d0d0" stroke-width="1" fill="none"/><circle cx="6" cy="6.400" r="1.600" fill="#e84a2a"/></svg>
<svg style="left:814px;top:5.600px" width="10" height="11" viewBox="0 0 10 11"><path d="M2.400 2.400v5.200a2 2 0 0 0 4 0V2.400" fill="none" stroke="#e8e8e8" stroke-width="1.100"/><path d="M8 4v5M1.600 9.800h6.800" stroke="#e8e8e8" stroke-width="0.800"/></svg>
<svg style="left:827px;top:5px" width="8" height="12" viewBox="0 0 8 12"><rect x="2.200" y="0.800" width="3.600" height="7.400" rx="0.600" fill="#e0e0e0"/><path d="M1 8.600l3 2.600 3-2.600z" fill="#c8c8c8"/></svg>
<svg style="left:837.5px;top:6px" width="11" height="10" viewBox="0 0 11 10"><rect x="3" y="1" width="7" height="5" fill="none" stroke="#e0e0e0" stroke-width="0.900"/><path d="M5 8.400h4M0.600 2.400h2.400M0.600 2.400v5.600h3" stroke="#e0e0e0" stroke-width="0.800" fill="none"/></svg>
<svg style="left:849.5px;top:6.400px" width="11" height="9" viewBox="0 0 11 9"><path d="M0.800 3.200h1.600L4.600 1v7L2.400 5.800H0.800z" fill="none" stroke="#d8d8d8" stroke-width="0.800"/><path d="M6.600 3l2.800 2.800M9.400 3L6.600 5.800" stroke="#d8d8d8" stroke-width="0.800"/></svg>
<span class="t" style="top:7px;font-size:6.6px;line-height:8.25px;color:#e8e8e8;left:865.00px;transform:scaleX(0.7793);transform-origin:0 50%;">РУС</span>
<span class="t" style="top:3px;font-size:5.6px;line-height:7.0px;color:#ececec;left:889.00px;transform:scaleX(0.9854);transform-origin:0 50%;">11:18</span>
<span class="t" style="top:12px;font-size:5.6px;line-height:7.0px;color:#ececec;left:882.00px;transform:scaleX(0.9883);transform-origin:0 50%;">24.10.2025</span>
<svg style="left:917.500px;top:4.600px" width="13" height="13" viewBox="0 0 13 13"><path d="M1 1h8.400v6.400H5L3 9.400V7.400H1z" fill="#f2f2f2"/><path d="M2.600 3h5.200M2.600 5h3.600" stroke="#2c2d2f" stroke-width="0.800"/><circle cx="9.400" cy="9.400" r="2.900" fill="#2c2d2f" stroke="#e8e8e8" stroke-width="0.700"/></svg>
<span class="t" style="top:11px;font-size:4.4px;line-height:5.5px;color:#f0f0f0;left:925.68px;transform:scaleX(0.9990);transform-origin:50% 50%;">4</span>
<div class="b" style="left:939.60px;top:1.00px;width:0.80px;height:20.00px;background:#5a5a5a;"></div>
</div>
</body></html>
